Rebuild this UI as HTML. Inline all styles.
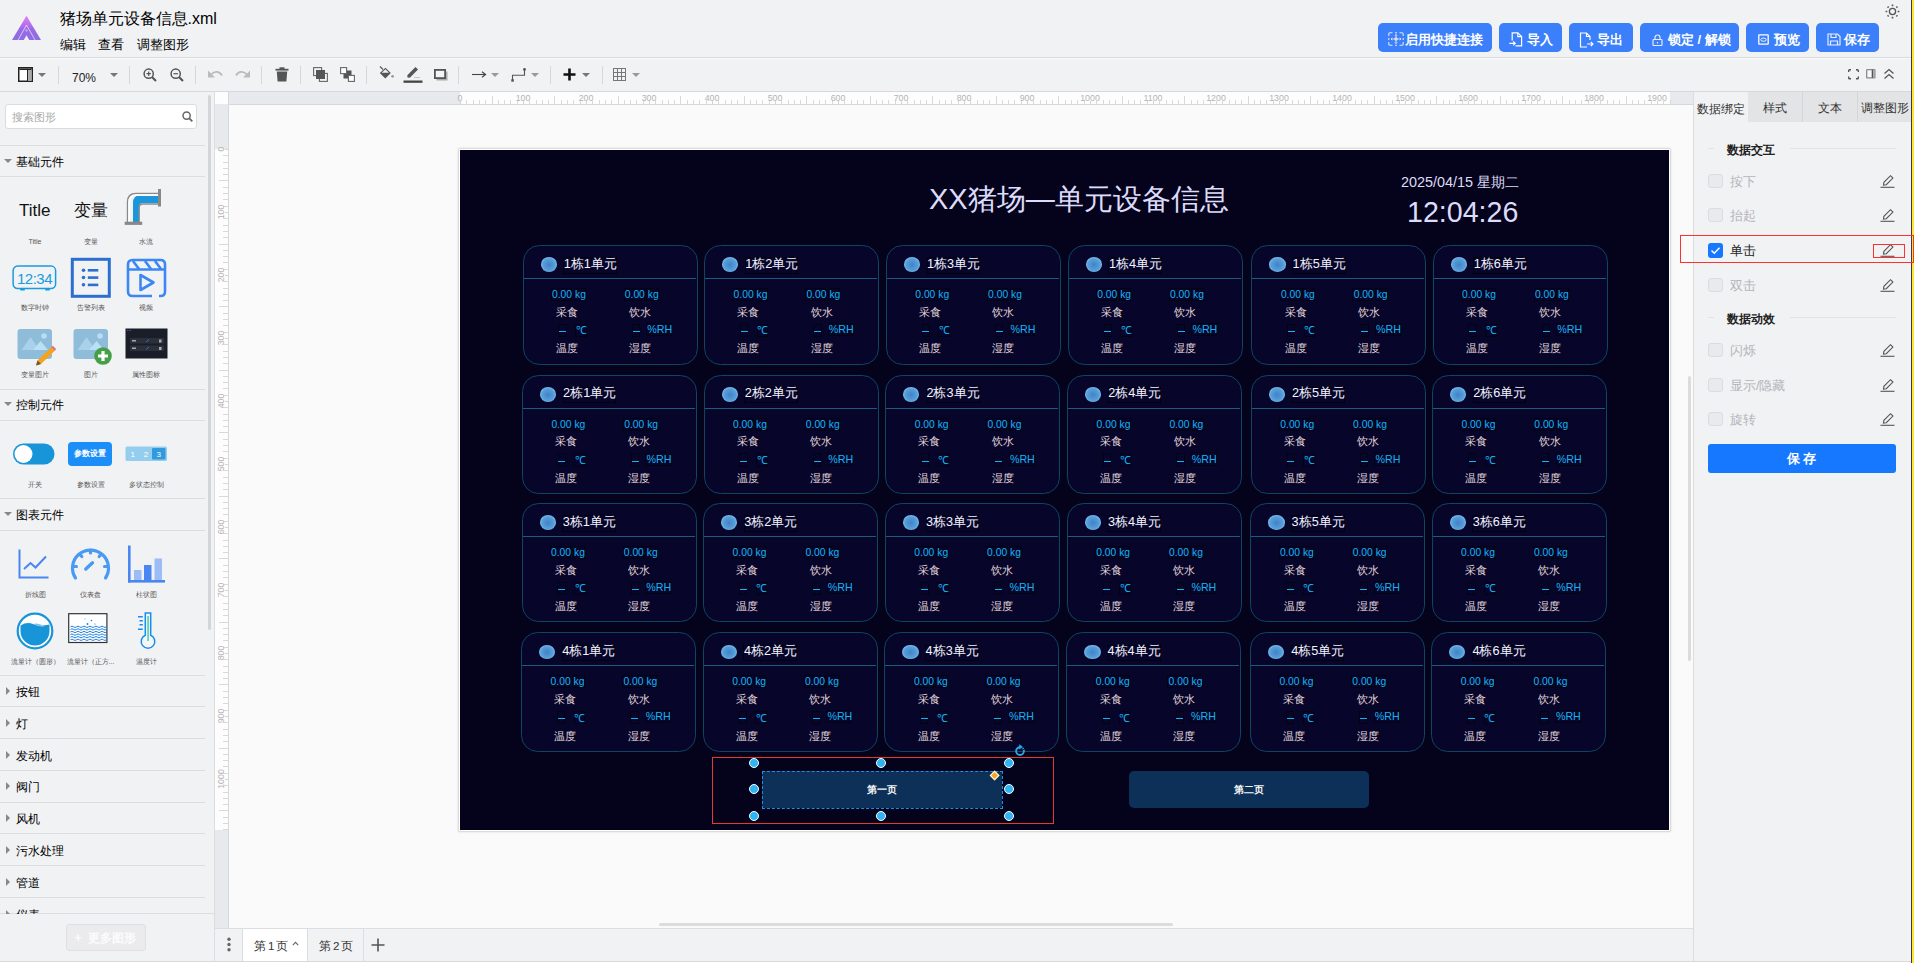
<!DOCTYPE html><html><head><meta charset="utf-8"><style>
*{box-sizing:border-box;margin:0;padding:0}
html,body{width:1914px;height:963px;overflow:hidden;background:#f1f2f4;font-family:"Liberation Sans",sans-serif;color:#1f1f1f}
.ab{position:absolute}
.t{position:absolute;white-space:nowrap;line-height:1}
.hb{position:absolute;top:23px;height:29px;background:#3b7ffb;border-radius:5px;color:#fff;font-weight:bold;font-size:13px}
.sep{position:absolute;top:66px;width:1px;height:18px;background:#d5d7da}
.caret{position:absolute;width:0;height:0;border-left:4px solid transparent;border-right:4px solid transparent;border-top:4px solid #777}
.hl{position:absolute;left:0;width:205px;height:1px;background:#dcdde0}
.sec{position:absolute;left:16px;font-size:12px;color:#000;line-height:1}
.tri-d{position:absolute;left:4px;width:0;height:0;border-left:4px solid transparent;border-right:4px solid transparent;border-top:4px solid #888}
.tri-r{position:absolute;left:6px;width:0;height:0;border-top:4px solid transparent;border-bottom:4px solid transparent;border-left:4px solid #888}
.lbl{position:absolute;font-size:7px;color:#555;line-height:1;white-space:nowrap;text-align:center;width:56px}

.card{position:absolute;width:175px;height:120.2px;border:1.8px solid #0e4562;border-radius:16.5px;background:#07062a}
.card .hl2{position:absolute;left:0;top:31.8px;width:172px;height:1.3px;background:#1b5b7b}
.ball{position:absolute;left:17px;top:11.2px;width:16.3px;height:14.6px;border-radius:50%;background:radial-gradient(ellipse at 50% 52%,#4282c4 0%,#569edb 52%,#86c6ef 78%,#a6dbf7 86%,#4f98d6 100%)}
.ttl{position:absolute;left:39.8px;top:11.2px;width:53.6px;height:16.4px;border:1px solid #02020f}
.ttx{position:absolute;left:40.2px;top:11.5px;font-size:12.7px;font-weight:normal;color:#f4f4ff;line-height:1;white-space:nowrap}
.ttx span{display:inline-block}
.bx{position:absolute;border:1px solid #030314;height:13.3px}
.val{position:absolute;font-size:10.3px;color:#14b4f2;line-height:1;white-space:nowrap}
.nm{position:absolute;font-size:10.5px;color:#e4d8dc;line-height:1;white-space:nowrap}
.dd{position:absolute;width:7px;height:1.2px;background:#14b4f2}
</style></head><body>
<svg class="ab" style="left:10px;top:14px" width="34" height="28" viewBox="0 0 34 28">
<defs><linearGradient id="lg" x1="0" y1="0" x2="0" y2="1"><stop offset="0" stop-color="#ec7cf8"/><stop offset="0.55" stop-color="#9a6ae6"/><stop offset="1" stop-color="#8e6de0"/></linearGradient></defs>
<polygon points="16.5,1.8 31,26 2,26" fill="url(#lg)"/>
<polygon points="16.5,21.3 13.7,26.2 19.4,26.2" fill="#f1f2f4"/>
<polyline points="8.1,26 16.5,11 25,26" fill="none" stroke="#f5eaff" stroke-width="0.7"/>
<circle cx="16.5" cy="16.5" r="0.8" fill="none" stroke="#f5eaff" stroke-width="0.5"/>
</svg>
<div class="t" style="left:59.5px;top:11px;font-size:16px;color:#000">猪场单元设备信息.xml</div>
<div class="t" style="left:59.5px;top:38px;font-size:13px;color:#000">编辑</div>
<div class="t" style="left:97.8px;top:38px;font-size:13px;color:#000">查看</div>
<div class="t" style="left:136.8px;top:38px;font-size:13px;color:#000">调整图形</div>
<div class="ab" style="left:0;top:57px;width:1911px;height:1px;background:#d9dadd"></div>
<div class="ab" style="left:0;top:58px;width:1911px;height:1px;background:#fbfbfc"></div>
<div class="hb" style="left:1378px;width:114px"></div>
<div class="hb" style="left:1499px;width:63px"></div>
<div class="hb" style="left:1569px;width:64px"></div>
<div class="hb" style="left:1640px;width:99px"></div>
<div class="hb" style="left:1746px;width:63px"></div>
<div class="hb" style="left:1816px;width:63px"></div>
<div class="t" style="left:1405px;top:33px;font-size:13px;font-weight:bold;color:#fff">启用快捷连接</div>
<div class="t" style="left:1527px;top:33px;font-size:13px;font-weight:bold;color:#fff">导入</div>
<div class="t" style="left:1597px;top:33px;font-size:13px;font-weight:bold;color:#fff">导出</div>
<div class="t" style="left:1668px;top:33px;font-size:13px;font-weight:bold;color:#fff">锁定 / 解锁</div>
<div class="t" style="left:1774px;top:33px;font-size:13px;font-weight:bold;color:#fff">预览</div>
<div class="t" style="left:1844px;top:33px;font-size:13px;font-weight:bold;color:#fff">保存</div>
<svg class="ab" style="left:1387.5px;top:32px" width="16" height="14" viewBox="0 0 16 14" fill="none" stroke="#dfe6f7" stroke-width="1.1">
<path d="M0.8 4V2Q0.8 0.8 2 0.8H4.5M11.5 0.8H14Q15.2 0.8 15.2 2V4M15.2 10V12Q15.2 13.2 14 13.2H11.5M4.5 13.2H2Q0.8 13.2 0.8 12V10M7 0.8H9M0.8 6V8M15.2 6V8M7 13.2H9"/>
<path d="M8 2.5V11.5M3 7H13M6.8 3.7L8 2.5L9.2 3.7M6.8 10.3L8 11.5L9.2 10.3M4.2 5.8L3 7L4.2 8.2M11.8 5.8L13 7L11.8 8.2" stroke-width="0.9"/><circle cx="8" cy="7" r="1.7" fill="#e6dfd0" stroke="none"/></svg>
<svg class="ab" style="left:1509px;top:32.3px" width="14" height="15" viewBox="0 0 14 15" fill="none" stroke="#fff" stroke-width="1.2">
<path d="M3.2 8.5V0.8H8.8L12.6 4.6V13.8H6.5"/><path d="M8.8 0.8V4.6H12.6"/><path d="M0.3 11.3H6.2M4.2 9.3L6.2 11.3L4.2 13.3"/></svg>
<svg class="ab" style="left:1579px;top:31.5px" width="15" height="16" viewBox="0 0 15 16" fill="none" stroke="#fff" stroke-width="1.2">
<path d="M8 15H1.5V1H7.5L11 4.5V8"/><path d="M7.5 1V4.5H11"/><path d="M8 12H14M11.8 9.8L14 12L11.8 14.2"/></svg>
<svg class="ab" style="left:1652px;top:33.5px" width="11" height="12" viewBox="0 0 11 12" fill="none" stroke="#e4ebfb" stroke-width="1.2">
<rect x="1" y="5.5" width="9" height="6" rx="0.8"/><path d="M3 5.5V3.5A2.5 2.5 0 0 1 8 3.5V5.5"/><path d="M5.5 8V9.5"/></svg>
<svg class="ab" style="left:1757.5px;top:33.5px" width="11" height="11" viewBox="0 0 11 11" fill="none" stroke="#fff" stroke-width="1.3">
<rect x="0.8" y="0.8" width="9.4" height="9.4" rx="0.5"/><ellipse cx="5.5" cy="5.7" rx="2.7" ry="1.6" stroke-width="0.9"/></svg>
<svg class="ab" style="left:1826.5px;top:33px" width="14" height="13" viewBox="0 0 14 13" fill="none" stroke="#e8eefc" stroke-width="1.2">
<path d="M1 1H10.5L13 3.5V12H1Z"/><path d="M4 1V4.5H9V1"/><path d="M3.5 12V8H10.5V12"/></svg>
<svg class="ab" style="left:1884.4px;top:3.3px" width="17" height="17" viewBox="0 0 17 17" fill="none" stroke="#555" stroke-width="1.3">
<circle cx="8.5" cy="8.5" r="3.1"/><path d="M8.5 1.6V3.3M8.5 13.7V15.4M1.6 8.5H3.3M13.7 8.5H15.4M3.6 3.6L4.6 4.6M12.4 12.4L13.4 13.4M3.6 13.4L4.6 12.4M12.4 4.6L13.4 3.6" stroke-width="1.6"/></svg>
<div class="ab" style="left:0;top:91px;width:1911px;height:1px;background:#d6d8db"></div>
<div class="sep" style="left:58px"></div>
<div class="sep" style="left:129px"></div>
<div class="sep" style="left:195px"></div>
<div class="sep" style="left:261px"></div>
<div class="sep" style="left:300px"></div>
<div class="sep" style="left:366px"></div>
<div class="sep" style="left:458px"></div>
<div class="sep" style="left:550px"></div>
<div class="sep" style="left:602px"></div>
<svg class="ab" style="left:18px;top:67px" width="15" height="15" viewBox="0 0 15 15"><rect x="0.75" y="0.75" width="13.5" height="13.5" fill="#fff" stroke="#222" stroke-width="1.5"/><rect x="1.5" y="1.5" width="12" height="1.5" fill="#222"/><rect x="9" y="3" width="1.2" height="11" fill="#222"/><rect x="10.2" y="3" width="3.3" height="11" fill="#aaa"/></svg>
<div class="caret" style="left:38px;top:73px"></div>
<div class="t" style="left:72px;top:71.5px;font-size:12px;color:#222">70%</div>
<div class="caret" style="left:110px;top:73px"></div>
<svg class="ab" style="left:143px;top:68px" width="14" height="14" viewBox="0 0 14 14" fill="none" stroke="#555" stroke-width="1.5"><circle cx="5.7" cy="5.7" r="4.6"/><path d="M9.2 9.2L13 13" stroke-width="2"/><path d="M3.5 5.7H7.9M5.7 3.5V7.9" stroke-width="1.2"/></svg>
<svg class="ab" style="left:170px;top:68px" width="14" height="14" viewBox="0 0 14 14" fill="none" stroke="#555" stroke-width="1.5"><circle cx="5.7" cy="5.7" r="4.6"/><path d="M9.2 9.2L13 13" stroke-width="2"/><path d="M3.5 5.7H7.9" stroke-width="1.2"/></svg>
<svg class="ab" style="left:208px;top:70px" width="15" height="9" viewBox="0 0 15 9"><path d="M3.5 4.2C6.5 1 11.5 1 14 5.5" fill="none" stroke="#bbb" stroke-width="1.8"/><polygon points="0,0.5 0,7.5 7,7.5" fill="#bbb"/></svg>
<svg class="ab" style="left:235px;top:70px" width="15" height="9" viewBox="0 0 15 9"><path d="M11.5 4.2C8.5 1 3.5 1 1 5.5" fill="none" stroke="#bbb" stroke-width="1.8"/><polygon points="15,0.5 15,7.5 8,7.5" fill="#bbb"/></svg>
<svg class="ab" style="left:275px;top:67px" width="14" height="15" viewBox="0 0 14 15"><rect x="0.5" y="1.8" width="13" height="1.8" fill="#555"/><rect x="4.5" y="0.3" width="5" height="2" fill="#555"/><path d="M1.8 4.5H12.2L11.4 14.5H2.6Z" fill="#555"/></svg>
<svg class="ab" style="left:313px;top:67px" width="15" height="15" viewBox="0 0 15 15"><rect x="0.6" y="0.6" width="8" height="8" fill="none" stroke="#666" stroke-width="1.1"/><rect x="6.4" y="6.4" width="8" height="8" fill="none" stroke="#666" stroke-width="1.1"/><rect x="3" y="3" width="9" height="9" fill="#555"/></svg>
<svg class="ab" style="left:340px;top:67px" width="15" height="15" viewBox="0 0 15 15"><rect x="3.5" y="3.5" width="8" height="8" fill="#555"/><rect x="0.6" y="0.6" width="6" height="6" fill="#fff" stroke="#666" stroke-width="1.1"/><rect x="8.4" y="8.4" width="6" height="6" fill="#fff" stroke="#666" stroke-width="1.1"/></svg>
<svg class="ab" style="left:379px;top:66px" width="16" height="14" viewBox="0 0 16 14"><path d="M1 0.5L4 3.5" stroke="#555" stroke-width="1.1"/><path d="M0.8 7L6.5 1.8L11.8 7L6.3 12.5Z" fill="#555"/><path d="M2.6 6.8L6.5 3.3L10 6.8Z" fill="#f1f2f4"/><circle cx="13.6" cy="10.3" r="1.4" fill="#999"/></svg>
<svg class="ab" style="left:403px;top:66px" width="20" height="17" viewBox="0 0 20 17"><path d="M4.5 11.5L4.3 9.2L12.5 1L15 3.5L6.8 11.7Z" fill="#555"/><rect x="0.5" y="14.5" width="19" height="2.3" fill="#444"/><rect x="11" y="11" width="6" height="0.8" fill="#bbb"/></svg>
<svg class="ab" style="left:434px;top:69px" width="14" height="12" viewBox="0 0 14 12"><rect x="2.5" y="2.5" width="11" height="9" fill="#aaa"/><rect x="0.9" y="0.9" width="10.2" height="8.2" fill="#f4f4f4" stroke="#555" stroke-width="1.8"/></svg>
<svg class="ab" style="left:472px;top:71px" width="15" height="7" viewBox="0 0 15 7"><path d="M0 3.5H13" stroke="#444" stroke-width="1.1"/><path d="M10 0.8L13.6 3.5L10 6.2" fill="none" stroke="#444" stroke-width="1.1"/></svg>
<div class="caret" style="left:491px;top:73px;border-top-color:#999"></div>
<svg class="ab" style="left:511px;top:68px" width="16" height="14" viewBox="0 0 16 14"><path d="M1.5 12.5V7.2H13.5V1.5" fill="none" stroke="#555" stroke-width="1.1"/><circle cx="13.5" cy="1.5" r="1.4" fill="#555"/><rect x="0.3" y="11.2" width="2.5" height="2.5" fill="#555"/></svg>
<div class="caret" style="left:531px;top:73px;border-top-color:#999"></div>
<svg class="ab" style="left:563px;top:68px" width="13" height="13" viewBox="0 0 13 13"><path d="M6.5 0.5V12.5M0.5 6.5H12.5" stroke="#111" stroke-width="2.6"/></svg>
<div class="caret" style="left:582px;top:73px;border-top-color:#777"></div>
<svg class="ab" style="left:613px;top:68px" width="13" height="13" viewBox="0 0 13 13" fill="none" stroke="#777" stroke-width="1"><rect x="0.5" y="0.5" width="12" height="12"/><path d="M4.5 0.5V12.5M8.5 0.5V12.5M0.5 4.5H12.5M0.5 8.5H12.5"/></svg>
<div class="caret" style="left:632px;top:73px;border-top-color:#999"></div>
<svg class="ab" style="left:1847.5px;top:68.8px" width="11" height="11" viewBox="0 0 11 11" fill="none" stroke="#555" stroke-width="1.4"><path d="M0.7 3V1.5Q0.7 0.7 1.5 0.7H3M8 0.7H9.5Q10.3 0.7 10.3 1.5V3M10.3 7.5V9Q10.3 9.8 9.5 9.8H8M3 9.8H1.5Q0.7 9.8 0.7 9V7.5"/></svg>
<svg class="ab" style="left:1866.3px;top:69.3px" width="10" height="10" viewBox="0 0 10 10"><rect x="0.7" y="0.7" width="8.2" height="8.2" fill="#f8f8f8" stroke="#8a8a8a" stroke-width="1.3" rx="0.5"/><rect x="5.7" y="0.7" width="1.3" height="8.2" fill="#555"/><rect x="7" y="1.3" width="1.3" height="7" fill="#aaa"/></svg>
<svg class="ab" style="left:1883px;top:68px" width="12" height="12" viewBox="0 0 12 12" fill="none" stroke="#555" stroke-width="1.3"><path d="M1.5 5.5L6 1.5L10.5 5.5M1.5 10.5L6 6.5L10.5 10.5"/></svg>
<div class="ab" style="left:214px;top:92px;width:1px;height:871px;background:#dcdde0"></div>
<div class="ab" style="left:208px;top:95px;width:3px;height:535px;background:#d4d5d8;border-radius:2px"></div>
<div class="ab" style="left:5px;top:104px;width:192px;height:25px;background:#fff;border:1px solid #dcdcdc;border-radius:3px"></div>
<div class="t" style="left:12px;top:112px;font-size:11px;color:#a8a8a8">搜索图形</div>
<svg class="ab" style="left:182px;top:111px" width="11" height="11" viewBox="0 0 11 11" fill="none" stroke="#666" stroke-width="1.5"><circle cx="4.6" cy="4.6" r="3.6"/><path d="M7.3 7.3L10.3 10.3" stroke-width="1.8"/></svg>
<div class="hl" style="top:145px"></div>
<div class="hl" style="top:176px"></div>
<div class="hl" style="top:389px"></div>
<div class="hl" style="top:420px"></div>
<div class="hl" style="top:498px"></div>
<div class="hl" style="top:530px"></div>
<div class="hl" style="top:675px"></div>
<div class="hl" style="top:706px"></div>
<div class="hl" style="top:738px"></div>
<div class="hl" style="top:770px"></div>
<div class="hl" style="top:802px"></div>
<div class="hl" style="top:833px"></div>
<div class="hl" style="top:865px"></div>
<div class="hl" style="top:897px"></div>
<div class="ab" style="left:0;top:913px;width:214px;height:1px;background:#dcdde0"></div>
<div class="tri-d" style="top:159px"></div>
<div class="sec" style="top:156px">基础元件</div>
<div class="tri-d" style="top:402px"></div>
<div class="sec" style="top:399px">控制元件</div>
<div class="tri-d" style="top:512px"></div>
<div class="sec" style="top:509px">图表元件</div>
<div class="tri-r" style="top:687px"></div>
<div class="sec" style="top:686px">按钮</div>
<div class="tri-r" style="top:719px"></div>
<div class="sec" style="top:718px">灯</div>
<div class="tri-r" style="top:751px"></div>
<div class="sec" style="top:750px">发动机</div>
<div class="tri-r" style="top:782px"></div>
<div class="sec" style="top:781px">阀门</div>
<div class="tri-r" style="top:814px"></div>
<div class="sec" style="top:813px">风机</div>
<div class="tri-r" style="top:846px"></div>
<div class="sec" style="top:845px">污水处理</div>
<div class="tri-r" style="top:878px"></div>
<div class="sec" style="top:877px">管道</div>
<div class="tri-r" style="top:910px"></div>
<div class="sec" style="top:909px">仪表</div>
<div class="ab" style="left:0;top:914px;width:214px;height:49px;background:#f1f2f4"></div>
<div class="ab" style="left:66px;top:924px;width:80px;height:27px;background:#ebebed;border:1px solid #dedfe2;border-radius:3px"></div>
<div class="t" style="left:74.5px;top:932px;font-size:12.2px;font-weight:bold;color:#fbfbfc">+&nbsp; 更多图形</div>
<div class="t" style="left:19px;top:202px;font-size:17px;color:#111">Title</div>
<div class="t" style="left:74px;top:202px;font-size:17px;color:#111">变量</div>
<svg class="ab" style="left:124px;top:188px" width="38" height="38" viewBox="0 0 38 38">
<path d="M9 34V15Q9 7 17 7H34V15H19Q15 15 15 19V34Z" fill="#1a96dc"/>
<path d="M3.5 34V14Q3.5 5.5 12 5.5H34" fill="none" stroke="#8a8a8a" stroke-width="1.4"/>
<path d="M5.2 34V14.5Q5.2 7.2 12.5 7.2H34" fill="none" stroke="#fff" stroke-width="1.8"/>
<path d="M15.2 34V19.5Q15.2 16 18.7 16H34" fill="none" stroke="#8a8a8a" stroke-width="1.4"/>
<rect x="34" y="1" width="3" height="17.5" fill="#888"/>
<rect x="0.7" y="33.7" width="17.5" height="3.2" fill="#888"/>
</svg>
<div class="lbl" style="left:5.0px;top:238px;width:60px">Title</div>
<div class="lbl" style="left:60.5px;top:238px;width:60px">变量</div>
<div class="lbl" style="left:116.0px;top:238px;width:60px">水流</div>
<svg class="ab" style="left:12.3px;top:265.2px" width="46" height="27" viewBox="0 0 46 27">
<rect x="1.1" y="1.1" width="42.5" height="22.5" rx="4.5" fill="none" stroke="#1a9ae0" stroke-width="1.5"/>
<rect x="8" y="24" width="5" height="1.6" rx="0.8" fill="#1a9ae0"/><rect x="33" y="24" width="5" height="1.6" rx="0.8" fill="#1a9ae0"/>
<text x="22.5" y="19" text-anchor="middle" font-family="Liberation Sans" font-size="15" fill="#1a9ae0" letter-spacing="-0.5">12:34</text>
</svg>
<svg class="ab" style="left:70px;top:257px" width="42" height="42" viewBox="0 0 42 42">
<rect x="2.3" y="2.3" width="37" height="37" fill="none" stroke="#2d6fd1" stroke-width="3"/>
<circle cx="13.5" cy="13.2" r="1.8" fill="#2d6fd1"/><circle cx="13.5" cy="20.5" r="1.8" fill="#2d6fd1"/><circle cx="13.5" cy="27.8" r="1.8" fill="#2d6fd1"/>
<rect x="17.8" y="12" width="10.5" height="2.6" fill="#2d6fd1"/><rect x="17.8" y="19.3" width="10.5" height="2.6" fill="#2d6fd1"/><rect x="17.8" y="26.6" width="10.5" height="2.6" fill="#2d6fd1"/>
</svg>
<svg class="ab" style="left:126px;top:257px" width="42" height="42" viewBox="0 0 42 42" fill="none" stroke="#3d87f5" stroke-width="2.6">
<path d="M26 39H6.5Q2 39 2 34.5V7.5Q2 3 6.5 3H34.5Q39 3 39 7.5V34.5Q39 39 34.5 39H33"/>
<path d="M2 12.5H39M7 4L13 12M19 4L25 12M29 4L35 12"/>
<path d="M14.5 18V33L27.5 25.5Z" stroke-linejoin="round"/>
</svg>
<div class="lbl" style="left:5.0px;top:304px;width:60px">数字时钟</div>
<div class="lbl" style="left:60.5px;top:304px;width:60px">告警列表</div>
<div class="lbl" style="left:116.0px;top:304px;width:60px">视频</div>
<svg class="ab" style="left:17px;top:328px" width="40" height="40" viewBox="0 0 40 40">
<rect x="0.5" y="1" width="34.5" height="30" rx="3" fill="#8fbcd8"/>
<polygon points="4.5,22 13.5,9 22.5,22" fill="#a9d1ea"/><polygon points="16,22 23.5,13 31,22" fill="#b9e0f5"/><circle cx="27" cy="8" r="2.8" fill="#b7ddf2"/><path d="M19 37.5L20.5 32.5L34 19.5L37.5 23L24 36Z" fill="#f5a31a"/><path d="M34 19.5L35.8 17.8L39.3 21.3L37.5 23Z" fill="#e57373"/><path d="M19 37.5L20.5 32.5L24 36Z" fill="#444" opacity="0.8"/></svg>
<svg class="ab" style="left:73px;top:328px" width="40" height="40" viewBox="0 0 40 40">
<rect x="0.5" y="1" width="34.5" height="30" rx="3" fill="#8fbcd8"/>
<polygon points="4.5,22 13.5,9 22.5,22" fill="#a9d1ea"/><polygon points="16,22 23.5,13 31,22" fill="#b9e0f5"/><circle cx="27" cy="8" r="2.8" fill="#b7ddf2"/><circle cx="30" cy="28" r="8.8" fill="#43a047"/><path d="M30 23V33M25 28H35" stroke="#fff" stroke-width="3.2"/></svg>
<svg class="ab" style="left:125px;top:328px" width="44" height="31" viewBox="0 0 44 31">
<rect x="0.5" y="0.5" width="42" height="30" fill="#1a1e29"/>
<rect x="5" y="10" width="34" height="5.5" fill="#2c303a"/><rect x="5" y="17.5" width="34" height="5.5" fill="#2c303a"/>
<circle cx="2.5" cy="2.5" r="0.5" fill="#3a6bd0"/><circle cx="4" cy="2.5" r="0.5" fill="#3a6bd0"/><circle cx="5.5" cy="2.5" r="0.5" fill="#3a6bd0"/>
<rect x="7" y="12" width="4" height="1.5" fill="#aaa"/><rect x="7" y="19.5" width="4" height="1.5" fill="#aaa"/>
<path d="M21 14L24 11.5M21 21.5L24 19" stroke="#3a6bd0" stroke-width="1"/>
<rect x="34" y="11.5" width="2.5" height="3" fill="#aaa"/><rect x="34" y="19" width="2.5" height="3" fill="#aaa"/>
</svg>
<div class="lbl" style="left:5.0px;top:371px;width:60px">变量图片</div>
<div class="lbl" style="left:60.5px;top:371px;width:60px">图片</div>
<div class="lbl" style="left:116.0px;top:371px;width:60px">属性图标</div>
<svg class="ab" style="left:12px;top:442px" width="44" height="24" viewBox="0 0 44 24">
<rect x="1" y="1.5" width="41.5" height="21" rx="10.5" fill="#1894d8"/><circle cx="11.5" cy="12" r="9" fill="#fff"/></svg>
<div class="ab" style="left:68px;top:442px;width:44px;height:24px;background:#1b8ef8;border-radius:4px"></div>
<div class="t" style="left:74px;top:450px;font-size:8px;color:#fff;font-weight:bold">参数设置</div>
<svg class="ab" style="left:125px;top:446px" width="43" height="16" viewBox="0 0 43 16">
<rect x="0.5" y="0.5" width="41.5" height="14.5" rx="1.5" fill="#94cdee"/><rect x="27" y="2" width="13.5" height="11.5" rx="1" fill="#3199dd"/>
<text x="7.7" y="11" font-family="Liberation Sans" font-size="8" fill="#fff" text-anchor="middle">1</text>
<text x="21" y="11" font-family="Liberation Sans" font-size="8" fill="#fff" text-anchor="middle">2</text>
<text x="33.8" y="11" font-family="Liberation Sans" font-size="8" fill="#fff" text-anchor="middle">3</text></svg>
<div class="lbl" style="left:5.0px;top:481px;width:60px">开关</div>
<div class="lbl" style="left:60.5px;top:481px;width:60px">参数设置</div>
<div class="lbl" style="left:116.0px;top:481px;width:60px">多状态控制</div>
<svg class="ab" style="left:18px;top:549px" width="32" height="31" viewBox="0 0 32 31" fill="none" stroke="#4a86f2">
<path d="M1.5 0.5V28.5H30.5" stroke-width="2"/><path d="M6 20L12.5 14L17.5 18.5L28 7.5" stroke-width="2"/></svg>
<svg class="ab" style="left:70px;top:547px" width="41" height="34" viewBox="0 0 41 34" fill="none" stroke="#4a9af5" stroke-width="3.2" stroke-linecap="round">
<path d="M5.5 31A18 18 0 1 1 35.5 31"/><path d="M20.5 3V6M10 7.5L11.8 9.5M31 7.5L29.2 9.5M3.5 19.5H6.5M34.5 19.5H37.5"/><path d="M15.8 22L22.5 15.8" stroke-width="3.4"/></svg>
<svg class="ab" style="left:127px;top:545px" width="39" height="39" viewBox="0 0 39 39">
<rect x="1" y="0.5" width="2.6" height="37" fill="#4a86f2"/><rect x="1" y="35" width="37" height="2.6" fill="#4a86f2"/>
<rect x="7" y="25" width="7.5" height="10" fill="#9bbcf5"/><rect x="17" y="20" width="7.5" height="15" fill="#4a86f2"/><rect x="27.5" y="13.5" width="7.5" height="21.5" fill="#9bbcf5"/></svg>
<div class="lbl" style="left:5.0px;top:591px;width:60px">折线图</div>
<div class="lbl" style="left:60.5px;top:591px;width:60px">仪表盘</div>
<div class="lbl" style="left:116.0px;top:591px;width:60px">柱状图</div>
<svg class="ab" style="left:16px;top:612px" width="38" height="38" viewBox="0 0 38 38">
<circle cx="19" cy="19" r="17.3" fill="#fff" stroke="#1894d8" stroke-width="2.2"/>
<path d="M4.5 13.5Q11 9.5 17 12Q24 15 33.5 12.5V19A14.5 14.5 0 0 1 4.5 19Z" fill="#1894d8"/>
<path d="M17 12Q23 10.5 28 14.5Q24 15.5 17 12Z" fill="#7fc4ea"/></svg>
<svg class="ab" style="left:68px;top:613px" width="40" height="31" viewBox="0 0 40 31">
<rect x="0.7" y="0.7" width="38.2" height="28.8" fill="#fff" stroke="#333" stroke-width="1.2"/>
<g stroke="#1a7fe0" stroke-width="1" fill="none"><path d="M2.5 13.8q1.5 -1.3 3 0t3 0t3 0t3 0t3 0t3 0t3 0t3 0t3 0t3 0t3 0t3 0"/><path d="M2.5 16.4q1.5 -1.3 3 0t3 0t3 0t3 0t3 0t3 0t3 0t3 0t3 0t3 0t3 0t3 0"/><path d="M2.5 19.0q1.5 -1.3 3 0t3 0t3 0t3 0t3 0t3 0t3 0t3 0t3 0t3 0t3 0t3 0"/><path d="M2.5 21.6q1.5 -1.3 3 0t3 0t3 0t3 0t3 0t3 0t3 0t3 0t3 0t3 0t3 0t3 0"/><path d="M2.5 24.2q1.5 -1.3 3 0t3 0t3 0t3 0t3 0t3 0t3 0t3 0t3 0t3 0t3 0t3 0"/><path d="M2.5 26.8q1.5 -1.3 3 0t3 0t3 0t3 0t3 0t3 0t3 0t3 0t3 0t3 0t3 0t3 0"/></g><circle cx="19.5" cy="11" r="0.9" fill="#1a7fe0"/><circle cx="23.5" cy="7.5" r="0.8" fill="#1a7fe0"/><circle cx="27" cy="11" r="0.6" fill="#1a7fe0"/><circle cx="17" cy="6" r="0.5" fill="#1a7fe0"/></svg>
<svg class="ab" style="left:136px;top:611px" width="22" height="40" viewBox="0 0 22 40">
<path d="M9.3 2H14.7V24.2A6.8 6.8 0 1 1 9.3 24.2Z" fill="#f4f5f7" stroke="#1a8cf0" stroke-width="1.5"/>
<rect x="11.4" y="5" width="1.4" height="25" fill="#2ed1a5"/>
<rect x="2" y="5" width="4.8" height="1.5" fill="#1a8cf0"/><rect x="3.5" y="9" width="3.3" height="1.5" fill="#1a8cf0"/><rect x="3.5" y="13" width="3.3" height="1.5" fill="#1a8cf0"/><rect x="2" y="17.5" width="4.8" height="1.5" fill="#1a8cf0"/></svg>
<div class="lbl" style="left:0.0px;top:658px;width:70px">流量计（圆形）</div>
<div class="lbl" style="left:55.5px;top:658px;width:70px">流量计（正方...</div>
<div class="lbl" style="left:116.0px;top:658px;width:60px">温度计</div>
<div class="ab" style="left:215px;top:92px;width:1478px;height:836px;background:#fafafa"></div>
<div class="ab" style="left:215px;top:92px;width:13px;height:12px;background:#fdfdfd"></div>
<div class="ab" style="left:228px;top:92px;width:1465px;height:12px;background:#e8e9ec"></div>
<div class="ab" style="left:460px;top:92px;width:1210px;height:12px;background:#fdfdfd"></div>
<div class="ab" style="left:215px;top:104px;width:1478px;height:1px;background:#d7d8db"></div>
<div class="ab" style="left:215px;top:104px;width:13px;height:824px;background:#e8e9ec"></div>
<div class="ab" style="left:215px;top:149px;width:13px;height:681px;background:#fdfdfd"></div>
<div class="ab" style="left:228px;top:92px;width:1px;height:836px;background:#d7d8db"></div>
<svg class="ab" style="left:0;top:0" width="1914" height="963"><line x1="460.5" y1="101" x2="460.5" y2="104" stroke="#d4d4d4" stroke-width="1"/><text x="460.0" y="101" font-family="Liberation Sans" font-size="8.8" fill="#b4b4b4" text-anchor="middle">0</text><line x1="466.5" y1="100" x2="466.5" y2="104" stroke="#d9d9d9" stroke-width="1"/><line x1="473.5" y1="100" x2="473.5" y2="104" stroke="#d9d9d9" stroke-width="1"/><line x1="479.5" y1="100" x2="479.5" y2="104" stroke="#d9d9d9" stroke-width="1"/><line x1="485.5" y1="100" x2="485.5" y2="104" stroke="#d9d9d9" stroke-width="1"/><line x1="492.5" y1="96" x2="492.5" y2="104" stroke="#d9d9d9" stroke-width="1"/><line x1="498.5" y1="100" x2="498.5" y2="104" stroke="#d9d9d9" stroke-width="1"/><line x1="504.5" y1="100" x2="504.5" y2="104" stroke="#d9d9d9" stroke-width="1"/><line x1="510.5" y1="100" x2="510.5" y2="104" stroke="#d9d9d9" stroke-width="1"/><line x1="517.5" y1="100" x2="517.5" y2="104" stroke="#d9d9d9" stroke-width="1"/><line x1="523.5" y1="101" x2="523.5" y2="104" stroke="#d4d4d4" stroke-width="1"/><text x="523.0" y="101" font-family="Liberation Sans" font-size="8.8" fill="#b4b4b4" text-anchor="middle">100</text><line x1="529.5" y1="100" x2="529.5" y2="104" stroke="#d9d9d9" stroke-width="1"/><line x1="536.5" y1="100" x2="536.5" y2="104" stroke="#d9d9d9" stroke-width="1"/><line x1="542.5" y1="100" x2="542.5" y2="104" stroke="#d9d9d9" stroke-width="1"/><line x1="548.5" y1="100" x2="548.5" y2="104" stroke="#d9d9d9" stroke-width="1"/><line x1="554.5" y1="96" x2="554.5" y2="104" stroke="#d9d9d9" stroke-width="1"/><line x1="561.5" y1="100" x2="561.5" y2="104" stroke="#d9d9d9" stroke-width="1"/><line x1="567.5" y1="100" x2="567.5" y2="104" stroke="#d9d9d9" stroke-width="1"/><line x1="573.5" y1="100" x2="573.5" y2="104" stroke="#d9d9d9" stroke-width="1"/><line x1="580.5" y1="100" x2="580.5" y2="104" stroke="#d9d9d9" stroke-width="1"/><line x1="586.5" y1="101" x2="586.5" y2="104" stroke="#d4d4d4" stroke-width="1"/><text x="586.0" y="101" font-family="Liberation Sans" font-size="8.8" fill="#b4b4b4" text-anchor="middle">200</text><line x1="592.5" y1="100" x2="592.5" y2="104" stroke="#d9d9d9" stroke-width="1"/><line x1="599.5" y1="100" x2="599.5" y2="104" stroke="#d9d9d9" stroke-width="1"/><line x1="605.5" y1="100" x2="605.5" y2="104" stroke="#d9d9d9" stroke-width="1"/><line x1="611.5" y1="100" x2="611.5" y2="104" stroke="#d9d9d9" stroke-width="1"/><line x1="618.5" y1="96" x2="618.5" y2="104" stroke="#d9d9d9" stroke-width="1"/><line x1="624.5" y1="100" x2="624.5" y2="104" stroke="#d9d9d9" stroke-width="1"/><line x1="630.5" y1="100" x2="630.5" y2="104" stroke="#d9d9d9" stroke-width="1"/><line x1="636.5" y1="100" x2="636.5" y2="104" stroke="#d9d9d9" stroke-width="1"/><line x1="643.5" y1="100" x2="643.5" y2="104" stroke="#d9d9d9" stroke-width="1"/><line x1="649.5" y1="101" x2="649.5" y2="104" stroke="#d4d4d4" stroke-width="1"/><text x="649.0" y="101" font-family="Liberation Sans" font-size="8.8" fill="#b4b4b4" text-anchor="middle">300</text><line x1="655.5" y1="100" x2="655.5" y2="104" stroke="#d9d9d9" stroke-width="1"/><line x1="662.5" y1="100" x2="662.5" y2="104" stroke="#d9d9d9" stroke-width="1"/><line x1="668.5" y1="100" x2="668.5" y2="104" stroke="#d9d9d9" stroke-width="1"/><line x1="674.5" y1="100" x2="674.5" y2="104" stroke="#d9d9d9" stroke-width="1"/><line x1="680.5" y1="96" x2="680.5" y2="104" stroke="#d9d9d9" stroke-width="1"/><line x1="687.5" y1="100" x2="687.5" y2="104" stroke="#d9d9d9" stroke-width="1"/><line x1="693.5" y1="100" x2="693.5" y2="104" stroke="#d9d9d9" stroke-width="1"/><line x1="699.5" y1="100" x2="699.5" y2="104" stroke="#d9d9d9" stroke-width="1"/><line x1="706.5" y1="100" x2="706.5" y2="104" stroke="#d9d9d9" stroke-width="1"/><line x1="712.5" y1="101" x2="712.5" y2="104" stroke="#d4d4d4" stroke-width="1"/><text x="712.0" y="101" font-family="Liberation Sans" font-size="8.8" fill="#b4b4b4" text-anchor="middle">400</text><line x1="718.5" y1="100" x2="718.5" y2="104" stroke="#d9d9d9" stroke-width="1"/><line x1="725.5" y1="100" x2="725.5" y2="104" stroke="#d9d9d9" stroke-width="1"/><line x1="731.5" y1="100" x2="731.5" y2="104" stroke="#d9d9d9" stroke-width="1"/><line x1="737.5" y1="100" x2="737.5" y2="104" stroke="#d9d9d9" stroke-width="1"/><line x1="744.5" y1="96" x2="744.5" y2="104" stroke="#d9d9d9" stroke-width="1"/><line x1="750.5" y1="100" x2="750.5" y2="104" stroke="#d9d9d9" stroke-width="1"/><line x1="756.5" y1="100" x2="756.5" y2="104" stroke="#d9d9d9" stroke-width="1"/><line x1="762.5" y1="100" x2="762.5" y2="104" stroke="#d9d9d9" stroke-width="1"/><line x1="769.5" y1="100" x2="769.5" y2="104" stroke="#d9d9d9" stroke-width="1"/><line x1="775.5" y1="101" x2="775.5" y2="104" stroke="#d4d4d4" stroke-width="1"/><text x="775.0" y="101" font-family="Liberation Sans" font-size="8.8" fill="#b4b4b4" text-anchor="middle">500</text><line x1="781.5" y1="100" x2="781.5" y2="104" stroke="#d9d9d9" stroke-width="1"/><line x1="788.5" y1="100" x2="788.5" y2="104" stroke="#d9d9d9" stroke-width="1"/><line x1="794.5" y1="100" x2="794.5" y2="104" stroke="#d9d9d9" stroke-width="1"/><line x1="800.5" y1="100" x2="800.5" y2="104" stroke="#d9d9d9" stroke-width="1"/><line x1="806.5" y1="96" x2="806.5" y2="104" stroke="#d9d9d9" stroke-width="1"/><line x1="813.5" y1="100" x2="813.5" y2="104" stroke="#d9d9d9" stroke-width="1"/><line x1="819.5" y1="100" x2="819.5" y2="104" stroke="#d9d9d9" stroke-width="1"/><line x1="825.5" y1="100" x2="825.5" y2="104" stroke="#d9d9d9" stroke-width="1"/><line x1="832.5" y1="100" x2="832.5" y2="104" stroke="#d9d9d9" stroke-width="1"/><line x1="838.5" y1="101" x2="838.5" y2="104" stroke="#d4d4d4" stroke-width="1"/><text x="838.0" y="101" font-family="Liberation Sans" font-size="8.8" fill="#b4b4b4" text-anchor="middle">600</text><line x1="844.5" y1="100" x2="844.5" y2="104" stroke="#d9d9d9" stroke-width="1"/><line x1="851.5" y1="100" x2="851.5" y2="104" stroke="#d9d9d9" stroke-width="1"/><line x1="857.5" y1="100" x2="857.5" y2="104" stroke="#d9d9d9" stroke-width="1"/><line x1="863.5" y1="100" x2="863.5" y2="104" stroke="#d9d9d9" stroke-width="1"/><line x1="870.5" y1="96" x2="870.5" y2="104" stroke="#d9d9d9" stroke-width="1"/><line x1="876.5" y1="100" x2="876.5" y2="104" stroke="#d9d9d9" stroke-width="1"/><line x1="882.5" y1="100" x2="882.5" y2="104" stroke="#d9d9d9" stroke-width="1"/><line x1="888.5" y1="100" x2="888.5" y2="104" stroke="#d9d9d9" stroke-width="1"/><line x1="895.5" y1="100" x2="895.5" y2="104" stroke="#d9d9d9" stroke-width="1"/><line x1="901.5" y1="101" x2="901.5" y2="104" stroke="#d4d4d4" stroke-width="1"/><text x="901.0" y="101" font-family="Liberation Sans" font-size="8.8" fill="#b4b4b4" text-anchor="middle">700</text><line x1="907.5" y1="100" x2="907.5" y2="104" stroke="#d9d9d9" stroke-width="1"/><line x1="914.5" y1="100" x2="914.5" y2="104" stroke="#d9d9d9" stroke-width="1"/><line x1="920.5" y1="100" x2="920.5" y2="104" stroke="#d9d9d9" stroke-width="1"/><line x1="926.5" y1="100" x2="926.5" y2="104" stroke="#d9d9d9" stroke-width="1"/><line x1="932.5" y1="96" x2="932.5" y2="104" stroke="#d9d9d9" stroke-width="1"/><line x1="939.5" y1="100" x2="939.5" y2="104" stroke="#d9d9d9" stroke-width="1"/><line x1="945.5" y1="100" x2="945.5" y2="104" stroke="#d9d9d9" stroke-width="1"/><line x1="951.5" y1="100" x2="951.5" y2="104" stroke="#d9d9d9" stroke-width="1"/><line x1="958.5" y1="100" x2="958.5" y2="104" stroke="#d9d9d9" stroke-width="1"/><line x1="964.5" y1="101" x2="964.5" y2="104" stroke="#d4d4d4" stroke-width="1"/><text x="964.0" y="101" font-family="Liberation Sans" font-size="8.8" fill="#b4b4b4" text-anchor="middle">800</text><line x1="970.5" y1="100" x2="970.5" y2="104" stroke="#d9d9d9" stroke-width="1"/><line x1="977.5" y1="100" x2="977.5" y2="104" stroke="#d9d9d9" stroke-width="1"/><line x1="983.5" y1="100" x2="983.5" y2="104" stroke="#d9d9d9" stroke-width="1"/><line x1="989.5" y1="100" x2="989.5" y2="104" stroke="#d9d9d9" stroke-width="1"/><line x1="996.5" y1="96" x2="996.5" y2="104" stroke="#d9d9d9" stroke-width="1"/><line x1="1002.5" y1="100" x2="1002.5" y2="104" stroke="#d9d9d9" stroke-width="1"/><line x1="1008.5" y1="100" x2="1008.5" y2="104" stroke="#d9d9d9" stroke-width="1"/><line x1="1014.5" y1="100" x2="1014.5" y2="104" stroke="#d9d9d9" stroke-width="1"/><line x1="1021.5" y1="100" x2="1021.5" y2="104" stroke="#d9d9d9" stroke-width="1"/><line x1="1027.5" y1="101" x2="1027.5" y2="104" stroke="#d4d4d4" stroke-width="1"/><text x="1027.0" y="101" font-family="Liberation Sans" font-size="8.8" fill="#b4b4b4" text-anchor="middle">900</text><line x1="1033.5" y1="100" x2="1033.5" y2="104" stroke="#d9d9d9" stroke-width="1"/><line x1="1040.5" y1="100" x2="1040.5" y2="104" stroke="#d9d9d9" stroke-width="1"/><line x1="1046.5" y1="100" x2="1046.5" y2="104" stroke="#d9d9d9" stroke-width="1"/><line x1="1052.5" y1="100" x2="1052.5" y2="104" stroke="#d9d9d9" stroke-width="1"/><line x1="1058.5" y1="96" x2="1058.5" y2="104" stroke="#d9d9d9" stroke-width="1"/><line x1="1065.5" y1="100" x2="1065.5" y2="104" stroke="#d9d9d9" stroke-width="1"/><line x1="1071.5" y1="100" x2="1071.5" y2="104" stroke="#d9d9d9" stroke-width="1"/><line x1="1077.5" y1="100" x2="1077.5" y2="104" stroke="#d9d9d9" stroke-width="1"/><line x1="1084.5" y1="100" x2="1084.5" y2="104" stroke="#d9d9d9" stroke-width="1"/><line x1="1090.5" y1="101" x2="1090.5" y2="104" stroke="#d4d4d4" stroke-width="1"/><text x="1090.0" y="101" font-family="Liberation Sans" font-size="8.8" fill="#b4b4b4" text-anchor="middle">1000</text><line x1="1096.5" y1="100" x2="1096.5" y2="104" stroke="#d9d9d9" stroke-width="1"/><line x1="1103.5" y1="100" x2="1103.5" y2="104" stroke="#d9d9d9" stroke-width="1"/><line x1="1109.5" y1="100" x2="1109.5" y2="104" stroke="#d9d9d9" stroke-width="1"/><line x1="1115.5" y1="100" x2="1115.5" y2="104" stroke="#d9d9d9" stroke-width="1"/><line x1="1122.5" y1="96" x2="1122.5" y2="104" stroke="#d9d9d9" stroke-width="1"/><line x1="1128.5" y1="100" x2="1128.5" y2="104" stroke="#d9d9d9" stroke-width="1"/><line x1="1134.5" y1="100" x2="1134.5" y2="104" stroke="#d9d9d9" stroke-width="1"/><line x1="1140.5" y1="100" x2="1140.5" y2="104" stroke="#d9d9d9" stroke-width="1"/><line x1="1147.5" y1="100" x2="1147.5" y2="104" stroke="#d9d9d9" stroke-width="1"/><line x1="1153.5" y1="101" x2="1153.5" y2="104" stroke="#d4d4d4" stroke-width="1"/><text x="1153.0" y="101" font-family="Liberation Sans" font-size="8.8" fill="#b4b4b4" text-anchor="middle">1100</text><line x1="1159.5" y1="100" x2="1159.5" y2="104" stroke="#d9d9d9" stroke-width="1"/><line x1="1166.5" y1="100" x2="1166.5" y2="104" stroke="#d9d9d9" stroke-width="1"/><line x1="1172.5" y1="100" x2="1172.5" y2="104" stroke="#d9d9d9" stroke-width="1"/><line x1="1178.5" y1="100" x2="1178.5" y2="104" stroke="#d9d9d9" stroke-width="1"/><line x1="1184.5" y1="96" x2="1184.5" y2="104" stroke="#d9d9d9" stroke-width="1"/><line x1="1191.5" y1="100" x2="1191.5" y2="104" stroke="#d9d9d9" stroke-width="1"/><line x1="1197.5" y1="100" x2="1197.5" y2="104" stroke="#d9d9d9" stroke-width="1"/><line x1="1203.5" y1="100" x2="1203.5" y2="104" stroke="#d9d9d9" stroke-width="1"/><line x1="1210.5" y1="100" x2="1210.5" y2="104" stroke="#d9d9d9" stroke-width="1"/><line x1="1216.5" y1="101" x2="1216.5" y2="104" stroke="#d4d4d4" stroke-width="1"/><text x="1216.0" y="101" font-family="Liberation Sans" font-size="8.8" fill="#b4b4b4" text-anchor="middle">1200</text><line x1="1222.5" y1="100" x2="1222.5" y2="104" stroke="#d9d9d9" stroke-width="1"/><line x1="1229.5" y1="100" x2="1229.5" y2="104" stroke="#d9d9d9" stroke-width="1"/><line x1="1235.5" y1="100" x2="1235.5" y2="104" stroke="#d9d9d9" stroke-width="1"/><line x1="1241.5" y1="100" x2="1241.5" y2="104" stroke="#d9d9d9" stroke-width="1"/><line x1="1248.5" y1="96" x2="1248.5" y2="104" stroke="#d9d9d9" stroke-width="1"/><line x1="1254.5" y1="100" x2="1254.5" y2="104" stroke="#d9d9d9" stroke-width="1"/><line x1="1260.5" y1="100" x2="1260.5" y2="104" stroke="#d9d9d9" stroke-width="1"/><line x1="1266.5" y1="100" x2="1266.5" y2="104" stroke="#d9d9d9" stroke-width="1"/><line x1="1273.5" y1="100" x2="1273.5" y2="104" stroke="#d9d9d9" stroke-width="1"/><line x1="1279.5" y1="101" x2="1279.5" y2="104" stroke="#d4d4d4" stroke-width="1"/><text x="1279.0" y="101" font-family="Liberation Sans" font-size="8.8" fill="#b4b4b4" text-anchor="middle">1300</text><line x1="1285.5" y1="100" x2="1285.5" y2="104" stroke="#d9d9d9" stroke-width="1"/><line x1="1292.5" y1="100" x2="1292.5" y2="104" stroke="#d9d9d9" stroke-width="1"/><line x1="1298.5" y1="100" x2="1298.5" y2="104" stroke="#d9d9d9" stroke-width="1"/><line x1="1304.5" y1="100" x2="1304.5" y2="104" stroke="#d9d9d9" stroke-width="1"/><line x1="1310.5" y1="96" x2="1310.5" y2="104" stroke="#d9d9d9" stroke-width="1"/><line x1="1317.5" y1="100" x2="1317.5" y2="104" stroke="#d9d9d9" stroke-width="1"/><line x1="1323.5" y1="100" x2="1323.5" y2="104" stroke="#d9d9d9" stroke-width="1"/><line x1="1329.5" y1="100" x2="1329.5" y2="104" stroke="#d9d9d9" stroke-width="1"/><line x1="1336.5" y1="100" x2="1336.5" y2="104" stroke="#d9d9d9" stroke-width="1"/><line x1="1342.5" y1="101" x2="1342.5" y2="104" stroke="#d4d4d4" stroke-width="1"/><text x="1342.0" y="101" font-family="Liberation Sans" font-size="8.8" fill="#b4b4b4" text-anchor="middle">1400</text><line x1="1348.5" y1="100" x2="1348.5" y2="104" stroke="#d9d9d9" stroke-width="1"/><line x1="1355.5" y1="100" x2="1355.5" y2="104" stroke="#d9d9d9" stroke-width="1"/><line x1="1361.5" y1="100" x2="1361.5" y2="104" stroke="#d9d9d9" stroke-width="1"/><line x1="1367.5" y1="100" x2="1367.5" y2="104" stroke="#d9d9d9" stroke-width="1"/><line x1="1374.5" y1="96" x2="1374.5" y2="104" stroke="#d9d9d9" stroke-width="1"/><line x1="1380.5" y1="100" x2="1380.5" y2="104" stroke="#d9d9d9" stroke-width="1"/><line x1="1386.5" y1="100" x2="1386.5" y2="104" stroke="#d9d9d9" stroke-width="1"/><line x1="1392.5" y1="100" x2="1392.5" y2="104" stroke="#d9d9d9" stroke-width="1"/><line x1="1399.5" y1="100" x2="1399.5" y2="104" stroke="#d9d9d9" stroke-width="1"/><line x1="1405.5" y1="101" x2="1405.5" y2="104" stroke="#d4d4d4" stroke-width="1"/><text x="1405.0" y="101" font-family="Liberation Sans" font-size="8.8" fill="#b4b4b4" text-anchor="middle">1500</text><line x1="1411.5" y1="100" x2="1411.5" y2="104" stroke="#d9d9d9" stroke-width="1"/><line x1="1418.5" y1="100" x2="1418.5" y2="104" stroke="#d9d9d9" stroke-width="1"/><line x1="1424.5" y1="100" x2="1424.5" y2="104" stroke="#d9d9d9" stroke-width="1"/><line x1="1430.5" y1="100" x2="1430.5" y2="104" stroke="#d9d9d9" stroke-width="1"/><line x1="1436.5" y1="96" x2="1436.5" y2="104" stroke="#d9d9d9" stroke-width="1"/><line x1="1443.5" y1="100" x2="1443.5" y2="104" stroke="#d9d9d9" stroke-width="1"/><line x1="1449.5" y1="100" x2="1449.5" y2="104" stroke="#d9d9d9" stroke-width="1"/><line x1="1455.5" y1="100" x2="1455.5" y2="104" stroke="#d9d9d9" stroke-width="1"/><line x1="1462.5" y1="100" x2="1462.5" y2="104" stroke="#d9d9d9" stroke-width="1"/><line x1="1468.5" y1="101" x2="1468.5" y2="104" stroke="#d4d4d4" stroke-width="1"/><text x="1468.0" y="101" font-family="Liberation Sans" font-size="8.8" fill="#b4b4b4" text-anchor="middle">1600</text><line x1="1474.5" y1="100" x2="1474.5" y2="104" stroke="#d9d9d9" stroke-width="1"/><line x1="1481.5" y1="100" x2="1481.5" y2="104" stroke="#d9d9d9" stroke-width="1"/><line x1="1487.5" y1="100" x2="1487.5" y2="104" stroke="#d9d9d9" stroke-width="1"/><line x1="1493.5" y1="100" x2="1493.5" y2="104" stroke="#d9d9d9" stroke-width="1"/><line x1="1500.5" y1="96" x2="1500.5" y2="104" stroke="#d9d9d9" stroke-width="1"/><line x1="1506.5" y1="100" x2="1506.5" y2="104" stroke="#d9d9d9" stroke-width="1"/><line x1="1512.5" y1="100" x2="1512.5" y2="104" stroke="#d9d9d9" stroke-width="1"/><line x1="1518.5" y1="100" x2="1518.5" y2="104" stroke="#d9d9d9" stroke-width="1"/><line x1="1525.5" y1="100" x2="1525.5" y2="104" stroke="#d9d9d9" stroke-width="1"/><line x1="1531.5" y1="101" x2="1531.5" y2="104" stroke="#d4d4d4" stroke-width="1"/><text x="1531.0" y="101" font-family="Liberation Sans" font-size="8.8" fill="#b4b4b4" text-anchor="middle">1700</text><line x1="1537.5" y1="100" x2="1537.5" y2="104" stroke="#d9d9d9" stroke-width="1"/><line x1="1544.5" y1="100" x2="1544.5" y2="104" stroke="#d9d9d9" stroke-width="1"/><line x1="1550.5" y1="100" x2="1550.5" y2="104" stroke="#d9d9d9" stroke-width="1"/><line x1="1556.5" y1="100" x2="1556.5" y2="104" stroke="#d9d9d9" stroke-width="1"/><line x1="1562.5" y1="96" x2="1562.5" y2="104" stroke="#d9d9d9" stroke-width="1"/><line x1="1569.5" y1="100" x2="1569.5" y2="104" stroke="#d9d9d9" stroke-width="1"/><line x1="1575.5" y1="100" x2="1575.5" y2="104" stroke="#d9d9d9" stroke-width="1"/><line x1="1581.5" y1="100" x2="1581.5" y2="104" stroke="#d9d9d9" stroke-width="1"/><line x1="1588.5" y1="100" x2="1588.5" y2="104" stroke="#d9d9d9" stroke-width="1"/><line x1="1594.5" y1="101" x2="1594.5" y2="104" stroke="#d4d4d4" stroke-width="1"/><text x="1594.0" y="101" font-family="Liberation Sans" font-size="8.8" fill="#b4b4b4" text-anchor="middle">1800</text><line x1="1600.5" y1="100" x2="1600.5" y2="104" stroke="#d9d9d9" stroke-width="1"/><line x1="1607.5" y1="100" x2="1607.5" y2="104" stroke="#d9d9d9" stroke-width="1"/><line x1="1613.5" y1="100" x2="1613.5" y2="104" stroke="#d9d9d9" stroke-width="1"/><line x1="1619.5" y1="100" x2="1619.5" y2="104" stroke="#d9d9d9" stroke-width="1"/><line x1="1626.5" y1="96" x2="1626.5" y2="104" stroke="#d9d9d9" stroke-width="1"/><line x1="1632.5" y1="100" x2="1632.5" y2="104" stroke="#d9d9d9" stroke-width="1"/><line x1="1638.5" y1="100" x2="1638.5" y2="104" stroke="#d9d9d9" stroke-width="1"/><line x1="1644.5" y1="100" x2="1644.5" y2="104" stroke="#d9d9d9" stroke-width="1"/><line x1="1651.5" y1="100" x2="1651.5" y2="104" stroke="#d9d9d9" stroke-width="1"/><line x1="1657.5" y1="101" x2="1657.5" y2="104" stroke="#d4d4d4" stroke-width="1"/><text x="1657.0" y="101" font-family="Liberation Sans" font-size="8.8" fill="#b4b4b4" text-anchor="middle">1900</text><line x1="1663.5" y1="100" x2="1663.5" y2="104" stroke="#d9d9d9" stroke-width="1"/><line x1="1670.5" y1="100" x2="1670.5" y2="104" stroke="#d9d9d9" stroke-width="1"/><line x1="225" y1="149.5" x2="228" y2="149.5" stroke="#d4d4d4" stroke-width="1"/><text x="0" y="0" transform="translate(223.5 149.0) rotate(-90)" font-family="Liberation Sans" font-size="8.8" fill="#b4b4b4" text-anchor="middle">0</text><line x1="223" y1="155.5" x2="228" y2="155.5" stroke="#d9d9d9" stroke-width="1"/><line x1="223" y1="162.5" x2="228" y2="162.5" stroke="#d9d9d9" stroke-width="1"/><line x1="223" y1="168.5" x2="228" y2="168.5" stroke="#d9d9d9" stroke-width="1"/><line x1="223" y1="174.5" x2="228" y2="174.5" stroke="#d9d9d9" stroke-width="1"/><line x1="219" y1="180.5" x2="228" y2="180.5" stroke="#d9d9d9" stroke-width="1"/><line x1="223" y1="187.5" x2="228" y2="187.5" stroke="#d9d9d9" stroke-width="1"/><line x1="223" y1="193.5" x2="228" y2="193.5" stroke="#d9d9d9" stroke-width="1"/><line x1="223" y1="199.5" x2="228" y2="199.5" stroke="#d9d9d9" stroke-width="1"/><line x1="223" y1="206.5" x2="228" y2="206.5" stroke="#d9d9d9" stroke-width="1"/><line x1="225" y1="212.5" x2="228" y2="212.5" stroke="#d4d4d4" stroke-width="1"/><text x="0" y="0" transform="translate(223.5 212.0) rotate(-90)" font-family="Liberation Sans" font-size="8.8" fill="#b4b4b4" text-anchor="middle">100</text><line x1="223" y1="218.5" x2="228" y2="218.5" stroke="#d9d9d9" stroke-width="1"/><line x1="223" y1="225.5" x2="228" y2="225.5" stroke="#d9d9d9" stroke-width="1"/><line x1="223" y1="231.5" x2="228" y2="231.5" stroke="#d9d9d9" stroke-width="1"/><line x1="223" y1="237.5" x2="228" y2="237.5" stroke="#d9d9d9" stroke-width="1"/><line x1="219" y1="244.5" x2="228" y2="244.5" stroke="#d9d9d9" stroke-width="1"/><line x1="223" y1="250.5" x2="228" y2="250.5" stroke="#d9d9d9" stroke-width="1"/><line x1="223" y1="256.5" x2="228" y2="256.5" stroke="#d9d9d9" stroke-width="1"/><line x1="223" y1="262.5" x2="228" y2="262.5" stroke="#d9d9d9" stroke-width="1"/><line x1="223" y1="269.5" x2="228" y2="269.5" stroke="#d9d9d9" stroke-width="1"/><line x1="225" y1="275.5" x2="228" y2="275.5" stroke="#d4d4d4" stroke-width="1"/><text x="0" y="0" transform="translate(223.5 275.0) rotate(-90)" font-family="Liberation Sans" font-size="8.8" fill="#b4b4b4" text-anchor="middle">200</text><line x1="223" y1="281.5" x2="228" y2="281.5" stroke="#d9d9d9" stroke-width="1"/><line x1="223" y1="288.5" x2="228" y2="288.5" stroke="#d9d9d9" stroke-width="1"/><line x1="223" y1="294.5" x2="228" y2="294.5" stroke="#d9d9d9" stroke-width="1"/><line x1="223" y1="300.5" x2="228" y2="300.5" stroke="#d9d9d9" stroke-width="1"/><line x1="219" y1="306.5" x2="228" y2="306.5" stroke="#d9d9d9" stroke-width="1"/><line x1="223" y1="313.5" x2="228" y2="313.5" stroke="#d9d9d9" stroke-width="1"/><line x1="223" y1="319.5" x2="228" y2="319.5" stroke="#d9d9d9" stroke-width="1"/><line x1="223" y1="325.5" x2="228" y2="325.5" stroke="#d9d9d9" stroke-width="1"/><line x1="223" y1="332.5" x2="228" y2="332.5" stroke="#d9d9d9" stroke-width="1"/><line x1="225" y1="338.5" x2="228" y2="338.5" stroke="#d4d4d4" stroke-width="1"/><text x="0" y="0" transform="translate(223.5 338.0) rotate(-90)" font-family="Liberation Sans" font-size="8.8" fill="#b4b4b4" text-anchor="middle">300</text><line x1="223" y1="344.5" x2="228" y2="344.5" stroke="#d9d9d9" stroke-width="1"/><line x1="223" y1="351.5" x2="228" y2="351.5" stroke="#d9d9d9" stroke-width="1"/><line x1="223" y1="357.5" x2="228" y2="357.5" stroke="#d9d9d9" stroke-width="1"/><line x1="223" y1="363.5" x2="228" y2="363.5" stroke="#d9d9d9" stroke-width="1"/><line x1="219" y1="370.5" x2="228" y2="370.5" stroke="#d9d9d9" stroke-width="1"/><line x1="223" y1="376.5" x2="228" y2="376.5" stroke="#d9d9d9" stroke-width="1"/><line x1="223" y1="382.5" x2="228" y2="382.5" stroke="#d9d9d9" stroke-width="1"/><line x1="223" y1="388.5" x2="228" y2="388.5" stroke="#d9d9d9" stroke-width="1"/><line x1="223" y1="395.5" x2="228" y2="395.5" stroke="#d9d9d9" stroke-width="1"/><line x1="225" y1="401.5" x2="228" y2="401.5" stroke="#d4d4d4" stroke-width="1"/><text x="0" y="0" transform="translate(223.5 401.0) rotate(-90)" font-family="Liberation Sans" font-size="8.8" fill="#b4b4b4" text-anchor="middle">400</text><line x1="223" y1="407.5" x2="228" y2="407.5" stroke="#d9d9d9" stroke-width="1"/><line x1="223" y1="414.5" x2="228" y2="414.5" stroke="#d9d9d9" stroke-width="1"/><line x1="223" y1="420.5" x2="228" y2="420.5" stroke="#d9d9d9" stroke-width="1"/><line x1="223" y1="426.5" x2="228" y2="426.5" stroke="#d9d9d9" stroke-width="1"/><line x1="219" y1="432.5" x2="228" y2="432.5" stroke="#d9d9d9" stroke-width="1"/><line x1="223" y1="439.5" x2="228" y2="439.5" stroke="#d9d9d9" stroke-width="1"/><line x1="223" y1="445.5" x2="228" y2="445.5" stroke="#d9d9d9" stroke-width="1"/><line x1="223" y1="451.5" x2="228" y2="451.5" stroke="#d9d9d9" stroke-width="1"/><line x1="223" y1="458.5" x2="228" y2="458.5" stroke="#d9d9d9" stroke-width="1"/><line x1="225" y1="464.5" x2="228" y2="464.5" stroke="#d4d4d4" stroke-width="1"/><text x="0" y="0" transform="translate(223.5 464.0) rotate(-90)" font-family="Liberation Sans" font-size="8.8" fill="#b4b4b4" text-anchor="middle">500</text><line x1="223" y1="470.5" x2="228" y2="470.5" stroke="#d9d9d9" stroke-width="1"/><line x1="223" y1="477.5" x2="228" y2="477.5" stroke="#d9d9d9" stroke-width="1"/><line x1="223" y1="483.5" x2="228" y2="483.5" stroke="#d9d9d9" stroke-width="1"/><line x1="223" y1="489.5" x2="228" y2="489.5" stroke="#d9d9d9" stroke-width="1"/><line x1="219" y1="496.5" x2="228" y2="496.5" stroke="#d9d9d9" stroke-width="1"/><line x1="223" y1="502.5" x2="228" y2="502.5" stroke="#d9d9d9" stroke-width="1"/><line x1="223" y1="508.5" x2="228" y2="508.5" stroke="#d9d9d9" stroke-width="1"/><line x1="223" y1="514.5" x2="228" y2="514.5" stroke="#d9d9d9" stroke-width="1"/><line x1="223" y1="521.5" x2="228" y2="521.5" stroke="#d9d9d9" stroke-width="1"/><line x1="225" y1="527.5" x2="228" y2="527.5" stroke="#d4d4d4" stroke-width="1"/><text x="0" y="0" transform="translate(223.5 527.0) rotate(-90)" font-family="Liberation Sans" font-size="8.8" fill="#b4b4b4" text-anchor="middle">600</text><line x1="223" y1="533.5" x2="228" y2="533.5" stroke="#d9d9d9" stroke-width="1"/><line x1="223" y1="540.5" x2="228" y2="540.5" stroke="#d9d9d9" stroke-width="1"/><line x1="223" y1="546.5" x2="228" y2="546.5" stroke="#d9d9d9" stroke-width="1"/><line x1="223" y1="552.5" x2="228" y2="552.5" stroke="#d9d9d9" stroke-width="1"/><line x1="219" y1="558.5" x2="228" y2="558.5" stroke="#d9d9d9" stroke-width="1"/><line x1="223" y1="565.5" x2="228" y2="565.5" stroke="#d9d9d9" stroke-width="1"/><line x1="223" y1="571.5" x2="228" y2="571.5" stroke="#d9d9d9" stroke-width="1"/><line x1="223" y1="577.5" x2="228" y2="577.5" stroke="#d9d9d9" stroke-width="1"/><line x1="223" y1="584.5" x2="228" y2="584.5" stroke="#d9d9d9" stroke-width="1"/><line x1="225" y1="590.5" x2="228" y2="590.5" stroke="#d4d4d4" stroke-width="1"/><text x="0" y="0" transform="translate(223.5 590.0) rotate(-90)" font-family="Liberation Sans" font-size="8.8" fill="#b4b4b4" text-anchor="middle">700</text><line x1="223" y1="596.5" x2="228" y2="596.5" stroke="#d9d9d9" stroke-width="1"/><line x1="223" y1="603.5" x2="228" y2="603.5" stroke="#d9d9d9" stroke-width="1"/><line x1="223" y1="609.5" x2="228" y2="609.5" stroke="#d9d9d9" stroke-width="1"/><line x1="223" y1="615.5" x2="228" y2="615.5" stroke="#d9d9d9" stroke-width="1"/><line x1="219" y1="622.5" x2="228" y2="622.5" stroke="#d9d9d9" stroke-width="1"/><line x1="223" y1="628.5" x2="228" y2="628.5" stroke="#d9d9d9" stroke-width="1"/><line x1="223" y1="634.5" x2="228" y2="634.5" stroke="#d9d9d9" stroke-width="1"/><line x1="223" y1="640.5" x2="228" y2="640.5" stroke="#d9d9d9" stroke-width="1"/><line x1="223" y1="647.5" x2="228" y2="647.5" stroke="#d9d9d9" stroke-width="1"/><line x1="225" y1="653.5" x2="228" y2="653.5" stroke="#d4d4d4" stroke-width="1"/><text x="0" y="0" transform="translate(223.5 653.0) rotate(-90)" font-family="Liberation Sans" font-size="8.8" fill="#b4b4b4" text-anchor="middle">800</text><line x1="223" y1="659.5" x2="228" y2="659.5" stroke="#d9d9d9" stroke-width="1"/><line x1="223" y1="666.5" x2="228" y2="666.5" stroke="#d9d9d9" stroke-width="1"/><line x1="223" y1="672.5" x2="228" y2="672.5" stroke="#d9d9d9" stroke-width="1"/><line x1="223" y1="678.5" x2="228" y2="678.5" stroke="#d9d9d9" stroke-width="1"/><line x1="219" y1="684.5" x2="228" y2="684.5" stroke="#d9d9d9" stroke-width="1"/><line x1="223" y1="691.5" x2="228" y2="691.5" stroke="#d9d9d9" stroke-width="1"/><line x1="223" y1="697.5" x2="228" y2="697.5" stroke="#d9d9d9" stroke-width="1"/><line x1="223" y1="703.5" x2="228" y2="703.5" stroke="#d9d9d9" stroke-width="1"/><line x1="223" y1="710.5" x2="228" y2="710.5" stroke="#d9d9d9" stroke-width="1"/><line x1="225" y1="716.5" x2="228" y2="716.5" stroke="#d4d4d4" stroke-width="1"/><text x="0" y="0" transform="translate(223.5 716.0) rotate(-90)" font-family="Liberation Sans" font-size="8.8" fill="#b4b4b4" text-anchor="middle">900</text><line x1="223" y1="722.5" x2="228" y2="722.5" stroke="#d9d9d9" stroke-width="1"/><line x1="223" y1="729.5" x2="228" y2="729.5" stroke="#d9d9d9" stroke-width="1"/><line x1="223" y1="735.5" x2="228" y2="735.5" stroke="#d9d9d9" stroke-width="1"/><line x1="223" y1="741.5" x2="228" y2="741.5" stroke="#d9d9d9" stroke-width="1"/><line x1="219" y1="748.5" x2="228" y2="748.5" stroke="#d9d9d9" stroke-width="1"/><line x1="223" y1="754.5" x2="228" y2="754.5" stroke="#d9d9d9" stroke-width="1"/><line x1="223" y1="760.5" x2="228" y2="760.5" stroke="#d9d9d9" stroke-width="1"/><line x1="223" y1="766.5" x2="228" y2="766.5" stroke="#d9d9d9" stroke-width="1"/><line x1="223" y1="773.5" x2="228" y2="773.5" stroke="#d9d9d9" stroke-width="1"/><line x1="225" y1="779.5" x2="228" y2="779.5" stroke="#d4d4d4" stroke-width="1"/><text x="0" y="0" transform="translate(223.5 779.0) rotate(-90)" font-family="Liberation Sans" font-size="8.8" fill="#b4b4b4" text-anchor="middle">1000</text><line x1="223" y1="785.5" x2="228" y2="785.5" stroke="#d9d9d9" stroke-width="1"/><line x1="223" y1="792.5" x2="228" y2="792.5" stroke="#d9d9d9" stroke-width="1"/><line x1="223" y1="798.5" x2="228" y2="798.5" stroke="#d9d9d9" stroke-width="1"/><line x1="223" y1="804.5" x2="228" y2="804.5" stroke="#d9d9d9" stroke-width="1"/><line x1="219" y1="810.5" x2="228" y2="810.5" stroke="#d9d9d9" stroke-width="1"/><line x1="223" y1="817.5" x2="228" y2="817.5" stroke="#d9d9d9" stroke-width="1"/><line x1="223" y1="823.5" x2="228" y2="823.5" stroke="#d9d9d9" stroke-width="1"/><line x1="223" y1="829.5" x2="228" y2="829.5" stroke="#d9d9d9" stroke-width="1"/></svg>
<div class="ab" style="left:1688px;top:376px;width:3px;height:285px;background:#dcdcdc;border-radius:2px"></div>
<div class="ab" style="left:659px;top:923px;width:514px;height:3px;background:#dcdcdc;border-radius:2px"></div>
<div class="ab" style="left:459px;top:149px;width:1211px;height:682px;box-shadow:0 0 2px 0.5px rgba(0,0,0,0.16);background:#fff;border-radius:1px"></div>
<div class="ab" style="left:460px;top:150px;width:1209px;height:680px;background:#05021b"></div>
<div class="t" style="left:929px;top:184.5px;font-size:29px;color:#dcdcfa">XX猪场—单元设备信息</div>
<div class="t" style="left:1401px;top:175px;font-size:14.4px;color:#dcdcf5">2025/04/15 星期二</div>
<div class="t" style="left:1407px;top:198px;font-size:28.6px;color:#dcdcfa">12:04:26</div>
<div class="card" style="left:522.5px;top:245.2px;height:120.2px"><div class="hl2"></div><div class="ball"></div><div class="ttl"></div><div class="ttx"><span>1</span>栋<span>1</span>单元</div><div class="bx" style="left:27.2px;top:41.8px;width:21px"></div><div class="bx" style="left:50.0px;top:41.8px;width:12.5px"></div><div class="val" style="left:28.5px;top:43.8px">0.00</div><div class="val" style="left:51.5px;top:43.8px">kg</div><div class="bx" style="left:100.0px;top:41.8px;width:21px"></div><div class="bx" style="left:122.8px;top:41.8px;width:12.5px"></div><div class="val" style="left:101.3px;top:43.8px">0.00</div><div class="val" style="left:124.3px;top:43.8px">kg</div><div class="nm" style="left:32.3px;top:60.6px">采食</div><div class="nm" style="left:105.6px;top:60.6px">饮水</div><div class="nm" style="left:32.3px;top:97.3px">温度</div><div class="nm" style="left:105.6px;top:97.3px">湿度</div><div class="bx" style="left:34.9px;top:77.5px;width:8.2px"></div><div class="dd" style="left:35.6px;top:84.8px"></div><div class="bx" style="left:51.6px;top:77.5px;width:11.5px"></div><div class="nm" style="left:52.1px;top:79.3px;color:#14b4f2;font-size:11px">℃</div><div class="bx" style="left:108.3px;top:77.5px;width:8.2px"></div><div class="dd" style="left:109px;top:84.8px"></div><div class="bx" style="left:122.5px;top:76.5px;width:26px"></div><div class="val" style="left:123.7px;top:77.8px;font-size:10.7px">%RH</div></div>
<div class="card" style="left:704.1px;top:245.2px;height:120.2px"><div class="hl2"></div><div class="ball"></div><div class="ttl"></div><div class="ttx"><span>1</span>栋<span>2</span>单元</div><div class="bx" style="left:27.2px;top:41.8px;width:21px"></div><div class="bx" style="left:50.0px;top:41.8px;width:12.5px"></div><div class="val" style="left:28.5px;top:43.8px">0.00</div><div class="val" style="left:51.5px;top:43.8px">kg</div><div class="bx" style="left:100.0px;top:41.8px;width:21px"></div><div class="bx" style="left:122.8px;top:41.8px;width:12.5px"></div><div class="val" style="left:101.3px;top:43.8px">0.00</div><div class="val" style="left:124.3px;top:43.8px">kg</div><div class="nm" style="left:32.3px;top:60.6px">采食</div><div class="nm" style="left:105.6px;top:60.6px">饮水</div><div class="nm" style="left:32.3px;top:97.3px">温度</div><div class="nm" style="left:105.6px;top:97.3px">湿度</div><div class="bx" style="left:34.9px;top:77.5px;width:8.2px"></div><div class="dd" style="left:35.6px;top:84.8px"></div><div class="bx" style="left:51.6px;top:77.5px;width:11.5px"></div><div class="nm" style="left:52.1px;top:79.3px;color:#14b4f2;font-size:11px">℃</div><div class="bx" style="left:108.3px;top:77.5px;width:8.2px"></div><div class="dd" style="left:109px;top:84.8px"></div><div class="bx" style="left:122.5px;top:76.5px;width:26px"></div><div class="val" style="left:123.7px;top:77.8px;font-size:10.7px">%RH</div></div>
<div class="card" style="left:885.8px;top:245.2px;height:120.2px"><div class="hl2"></div><div class="ball"></div><div class="ttl"></div><div class="ttx"><span>1</span>栋<span>3</span>单元</div><div class="bx" style="left:27.2px;top:41.8px;width:21px"></div><div class="bx" style="left:50.0px;top:41.8px;width:12.5px"></div><div class="val" style="left:28.5px;top:43.8px">0.00</div><div class="val" style="left:51.5px;top:43.8px">kg</div><div class="bx" style="left:100.0px;top:41.8px;width:21px"></div><div class="bx" style="left:122.8px;top:41.8px;width:12.5px"></div><div class="val" style="left:101.3px;top:43.8px">0.00</div><div class="val" style="left:124.3px;top:43.8px">kg</div><div class="nm" style="left:32.3px;top:60.6px">采食</div><div class="nm" style="left:105.6px;top:60.6px">饮水</div><div class="nm" style="left:32.3px;top:97.3px">温度</div><div class="nm" style="left:105.6px;top:97.3px">湿度</div><div class="bx" style="left:34.9px;top:77.5px;width:8.2px"></div><div class="dd" style="left:35.6px;top:84.8px"></div><div class="bx" style="left:51.6px;top:77.5px;width:11.5px"></div><div class="nm" style="left:52.1px;top:79.3px;color:#14b4f2;font-size:11px">℃</div><div class="bx" style="left:108.3px;top:77.5px;width:8.2px"></div><div class="dd" style="left:109px;top:84.8px"></div><div class="bx" style="left:122.5px;top:76.5px;width:26px"></div><div class="val" style="left:123.7px;top:77.8px;font-size:10.7px">%RH</div></div>
<div class="card" style="left:1067.7px;top:245.2px;height:120.2px"><div class="hl2"></div><div class="ball"></div><div class="ttl"></div><div class="ttx"><span>1</span>栋<span>4</span>单元</div><div class="bx" style="left:27.2px;top:41.8px;width:21px"></div><div class="bx" style="left:50.0px;top:41.8px;width:12.5px"></div><div class="val" style="left:28.5px;top:43.8px">0.00</div><div class="val" style="left:51.5px;top:43.8px">kg</div><div class="bx" style="left:100.0px;top:41.8px;width:21px"></div><div class="bx" style="left:122.8px;top:41.8px;width:12.5px"></div><div class="val" style="left:101.3px;top:43.8px">0.00</div><div class="val" style="left:124.3px;top:43.8px">kg</div><div class="nm" style="left:32.3px;top:60.6px">采食</div><div class="nm" style="left:105.6px;top:60.6px">饮水</div><div class="nm" style="left:32.3px;top:97.3px">温度</div><div class="nm" style="left:105.6px;top:97.3px">湿度</div><div class="bx" style="left:34.9px;top:77.5px;width:8.2px"></div><div class="dd" style="left:35.6px;top:84.8px"></div><div class="bx" style="left:51.6px;top:77.5px;width:11.5px"></div><div class="nm" style="left:52.1px;top:79.3px;color:#14b4f2;font-size:11px">℃</div><div class="bx" style="left:108.3px;top:77.5px;width:8.2px"></div><div class="dd" style="left:109px;top:84.8px"></div><div class="bx" style="left:122.5px;top:76.5px;width:26px"></div><div class="val" style="left:123.7px;top:77.8px;font-size:10.7px">%RH</div></div>
<div class="card" style="left:1251.4px;top:245.2px;height:120.2px"><div class="hl2"></div><div class="ball"></div><div class="ttl"></div><div class="ttx"><span>1</span>栋<span>5</span>单元</div><div class="bx" style="left:27.2px;top:41.8px;width:21px"></div><div class="bx" style="left:50.0px;top:41.8px;width:12.5px"></div><div class="val" style="left:28.5px;top:43.8px">0.00</div><div class="val" style="left:51.5px;top:43.8px">kg</div><div class="bx" style="left:100.0px;top:41.8px;width:21px"></div><div class="bx" style="left:122.8px;top:41.8px;width:12.5px"></div><div class="val" style="left:101.3px;top:43.8px">0.00</div><div class="val" style="left:124.3px;top:43.8px">kg</div><div class="nm" style="left:32.3px;top:60.6px">采食</div><div class="nm" style="left:105.6px;top:60.6px">饮水</div><div class="nm" style="left:32.3px;top:97.3px">温度</div><div class="nm" style="left:105.6px;top:97.3px">湿度</div><div class="bx" style="left:34.9px;top:77.5px;width:8.2px"></div><div class="dd" style="left:35.6px;top:84.8px"></div><div class="bx" style="left:51.6px;top:77.5px;width:11.5px"></div><div class="nm" style="left:52.1px;top:79.3px;color:#14b4f2;font-size:11px">℃</div><div class="bx" style="left:108.3px;top:77.5px;width:8.2px"></div><div class="dd" style="left:109px;top:84.8px"></div><div class="bx" style="left:122.5px;top:76.5px;width:26px"></div><div class="val" style="left:123.7px;top:77.8px;font-size:10.7px">%RH</div></div>
<div class="card" style="left:1432.6px;top:245.2px;height:120.2px"><div class="hl2"></div><div class="ball"></div><div class="ttl"></div><div class="ttx"><span>1</span>栋<span>6</span>单元</div><div class="bx" style="left:27.2px;top:41.8px;width:21px"></div><div class="bx" style="left:50.0px;top:41.8px;width:12.5px"></div><div class="val" style="left:28.5px;top:43.8px">0.00</div><div class="val" style="left:51.5px;top:43.8px">kg</div><div class="bx" style="left:100.0px;top:41.8px;width:21px"></div><div class="bx" style="left:122.8px;top:41.8px;width:12.5px"></div><div class="val" style="left:101.3px;top:43.8px">0.00</div><div class="val" style="left:124.3px;top:43.8px">kg</div><div class="nm" style="left:32.3px;top:60.6px">采食</div><div class="nm" style="left:105.6px;top:60.6px">饮水</div><div class="nm" style="left:32.3px;top:97.3px">温度</div><div class="nm" style="left:105.6px;top:97.3px">湿度</div><div class="bx" style="left:34.9px;top:77.5px;width:8.2px"></div><div class="dd" style="left:35.6px;top:84.8px"></div><div class="bx" style="left:51.6px;top:77.5px;width:11.5px"></div><div class="nm" style="left:52.1px;top:79.3px;color:#14b4f2;font-size:11px">℃</div><div class="bx" style="left:108.3px;top:77.5px;width:8.2px"></div><div class="dd" style="left:109px;top:84.8px"></div><div class="bx" style="left:122.5px;top:76.5px;width:26px"></div><div class="val" style="left:123.7px;top:77.8px;font-size:10.7px">%RH</div></div>
<div class="card" style="left:521.9px;top:374.8px;height:119px"><div class="hl2"></div><div class="ball"></div><div class="ttl"></div><div class="ttx"><span>2</span>栋<span>1</span>单元</div><div class="bx" style="left:27.2px;top:41.8px;width:21px"></div><div class="bx" style="left:50.0px;top:41.8px;width:12.5px"></div><div class="val" style="left:28.5px;top:43.8px">0.00</div><div class="val" style="left:51.5px;top:43.8px">kg</div><div class="bx" style="left:100.0px;top:41.8px;width:21px"></div><div class="bx" style="left:122.8px;top:41.8px;width:12.5px"></div><div class="val" style="left:101.3px;top:43.8px">0.00</div><div class="val" style="left:124.3px;top:43.8px">kg</div><div class="nm" style="left:32.3px;top:60.6px">采食</div><div class="nm" style="left:105.6px;top:60.6px">饮水</div><div class="nm" style="left:32.3px;top:97.3px">温度</div><div class="nm" style="left:105.6px;top:97.3px">湿度</div><div class="bx" style="left:34.9px;top:77.5px;width:8.2px"></div><div class="dd" style="left:35.6px;top:84.8px"></div><div class="bx" style="left:51.6px;top:77.5px;width:11.5px"></div><div class="nm" style="left:52.1px;top:79.3px;color:#14b4f2;font-size:11px">℃</div><div class="bx" style="left:108.3px;top:77.5px;width:8.2px"></div><div class="dd" style="left:109px;top:84.8px"></div><div class="bx" style="left:122.5px;top:76.5px;width:26px"></div><div class="val" style="left:123.7px;top:77.8px;font-size:10.7px">%RH</div></div>
<div class="card" style="left:703.5px;top:374.8px;height:119px"><div class="hl2"></div><div class="ball"></div><div class="ttl"></div><div class="ttx"><span>2</span>栋<span>2</span>单元</div><div class="bx" style="left:27.2px;top:41.8px;width:21px"></div><div class="bx" style="left:50.0px;top:41.8px;width:12.5px"></div><div class="val" style="left:28.5px;top:43.8px">0.00</div><div class="val" style="left:51.5px;top:43.8px">kg</div><div class="bx" style="left:100.0px;top:41.8px;width:21px"></div><div class="bx" style="left:122.8px;top:41.8px;width:12.5px"></div><div class="val" style="left:101.3px;top:43.8px">0.00</div><div class="val" style="left:124.3px;top:43.8px">kg</div><div class="nm" style="left:32.3px;top:60.6px">采食</div><div class="nm" style="left:105.6px;top:60.6px">饮水</div><div class="nm" style="left:32.3px;top:97.3px">温度</div><div class="nm" style="left:105.6px;top:97.3px">湿度</div><div class="bx" style="left:34.9px;top:77.5px;width:8.2px"></div><div class="dd" style="left:35.6px;top:84.8px"></div><div class="bx" style="left:51.6px;top:77.5px;width:11.5px"></div><div class="nm" style="left:52.1px;top:79.3px;color:#14b4f2;font-size:11px">℃</div><div class="bx" style="left:108.3px;top:77.5px;width:8.2px"></div><div class="dd" style="left:109px;top:84.8px"></div><div class="bx" style="left:122.5px;top:76.5px;width:26px"></div><div class="val" style="left:123.7px;top:77.8px;font-size:10.7px">%RH</div></div>
<div class="card" style="left:885.2px;top:374.8px;height:119px"><div class="hl2"></div><div class="ball"></div><div class="ttl"></div><div class="ttx"><span>2</span>栋<span>3</span>单元</div><div class="bx" style="left:27.2px;top:41.8px;width:21px"></div><div class="bx" style="left:50.0px;top:41.8px;width:12.5px"></div><div class="val" style="left:28.5px;top:43.8px">0.00</div><div class="val" style="left:51.5px;top:43.8px">kg</div><div class="bx" style="left:100.0px;top:41.8px;width:21px"></div><div class="bx" style="left:122.8px;top:41.8px;width:12.5px"></div><div class="val" style="left:101.3px;top:43.8px">0.00</div><div class="val" style="left:124.3px;top:43.8px">kg</div><div class="nm" style="left:32.3px;top:60.6px">采食</div><div class="nm" style="left:105.6px;top:60.6px">饮水</div><div class="nm" style="left:32.3px;top:97.3px">温度</div><div class="nm" style="left:105.6px;top:97.3px">湿度</div><div class="bx" style="left:34.9px;top:77.5px;width:8.2px"></div><div class="dd" style="left:35.6px;top:84.8px"></div><div class="bx" style="left:51.6px;top:77.5px;width:11.5px"></div><div class="nm" style="left:52.1px;top:79.3px;color:#14b4f2;font-size:11px">℃</div><div class="bx" style="left:108.3px;top:77.5px;width:8.2px"></div><div class="dd" style="left:109px;top:84.8px"></div><div class="bx" style="left:122.5px;top:76.5px;width:26px"></div><div class="val" style="left:123.7px;top:77.8px;font-size:10.7px">%RH</div></div>
<div class="card" style="left:1067.1px;top:374.8px;height:119px"><div class="hl2"></div><div class="ball"></div><div class="ttl"></div><div class="ttx"><span>2</span>栋<span>4</span>单元</div><div class="bx" style="left:27.2px;top:41.8px;width:21px"></div><div class="bx" style="left:50.0px;top:41.8px;width:12.5px"></div><div class="val" style="left:28.5px;top:43.8px">0.00</div><div class="val" style="left:51.5px;top:43.8px">kg</div><div class="bx" style="left:100.0px;top:41.8px;width:21px"></div><div class="bx" style="left:122.8px;top:41.8px;width:12.5px"></div><div class="val" style="left:101.3px;top:43.8px">0.00</div><div class="val" style="left:124.3px;top:43.8px">kg</div><div class="nm" style="left:32.3px;top:60.6px">采食</div><div class="nm" style="left:105.6px;top:60.6px">饮水</div><div class="nm" style="left:32.3px;top:97.3px">温度</div><div class="nm" style="left:105.6px;top:97.3px">湿度</div><div class="bx" style="left:34.9px;top:77.5px;width:8.2px"></div><div class="dd" style="left:35.6px;top:84.8px"></div><div class="bx" style="left:51.6px;top:77.5px;width:11.5px"></div><div class="nm" style="left:52.1px;top:79.3px;color:#14b4f2;font-size:11px">℃</div><div class="bx" style="left:108.3px;top:77.5px;width:8.2px"></div><div class="dd" style="left:109px;top:84.8px"></div><div class="bx" style="left:122.5px;top:76.5px;width:26px"></div><div class="val" style="left:123.7px;top:77.8px;font-size:10.7px">%RH</div></div>
<div class="card" style="left:1250.8px;top:374.8px;height:119px"><div class="hl2"></div><div class="ball"></div><div class="ttl"></div><div class="ttx"><span>2</span>栋<span>5</span>单元</div><div class="bx" style="left:27.2px;top:41.8px;width:21px"></div><div class="bx" style="left:50.0px;top:41.8px;width:12.5px"></div><div class="val" style="left:28.5px;top:43.8px">0.00</div><div class="val" style="left:51.5px;top:43.8px">kg</div><div class="bx" style="left:100.0px;top:41.8px;width:21px"></div><div class="bx" style="left:122.8px;top:41.8px;width:12.5px"></div><div class="val" style="left:101.3px;top:43.8px">0.00</div><div class="val" style="left:124.3px;top:43.8px">kg</div><div class="nm" style="left:32.3px;top:60.6px">采食</div><div class="nm" style="left:105.6px;top:60.6px">饮水</div><div class="nm" style="left:32.3px;top:97.3px">温度</div><div class="nm" style="left:105.6px;top:97.3px">湿度</div><div class="bx" style="left:34.9px;top:77.5px;width:8.2px"></div><div class="dd" style="left:35.6px;top:84.8px"></div><div class="bx" style="left:51.6px;top:77.5px;width:11.5px"></div><div class="nm" style="left:52.1px;top:79.3px;color:#14b4f2;font-size:11px">℃</div><div class="bx" style="left:108.3px;top:77.5px;width:8.2px"></div><div class="dd" style="left:109px;top:84.8px"></div><div class="bx" style="left:122.5px;top:76.5px;width:26px"></div><div class="val" style="left:123.7px;top:77.8px;font-size:10.7px">%RH</div></div>
<div class="card" style="left:1432.0px;top:374.8px;height:119px"><div class="hl2"></div><div class="ball"></div><div class="ttl"></div><div class="ttx"><span>2</span>栋<span>6</span>单元</div><div class="bx" style="left:27.2px;top:41.8px;width:21px"></div><div class="bx" style="left:50.0px;top:41.8px;width:12.5px"></div><div class="val" style="left:28.5px;top:43.8px">0.00</div><div class="val" style="left:51.5px;top:43.8px">kg</div><div class="bx" style="left:100.0px;top:41.8px;width:21px"></div><div class="bx" style="left:122.8px;top:41.8px;width:12.5px"></div><div class="val" style="left:101.3px;top:43.8px">0.00</div><div class="val" style="left:124.3px;top:43.8px">kg</div><div class="nm" style="left:32.3px;top:60.6px">采食</div><div class="nm" style="left:105.6px;top:60.6px">饮水</div><div class="nm" style="left:32.3px;top:97.3px">温度</div><div class="nm" style="left:105.6px;top:97.3px">湿度</div><div class="bx" style="left:34.9px;top:77.5px;width:8.2px"></div><div class="dd" style="left:35.6px;top:84.8px"></div><div class="bx" style="left:51.6px;top:77.5px;width:11.5px"></div><div class="nm" style="left:52.1px;top:79.3px;color:#14b4f2;font-size:11px">℃</div><div class="bx" style="left:108.3px;top:77.5px;width:8.2px"></div><div class="dd" style="left:109px;top:84.8px"></div><div class="bx" style="left:122.5px;top:76.5px;width:26px"></div><div class="val" style="left:123.7px;top:77.8px;font-size:10.7px">%RH</div></div>
<div class="card" style="left:521.5px;top:503.2px;height:119.2px"><div class="hl2"></div><div class="ball"></div><div class="ttl"></div><div class="ttx"><span>3</span>栋<span>1</span>单元</div><div class="bx" style="left:27.2px;top:41.8px;width:21px"></div><div class="bx" style="left:50.0px;top:41.8px;width:12.5px"></div><div class="val" style="left:28.5px;top:43.8px">0.00</div><div class="val" style="left:51.5px;top:43.8px">kg</div><div class="bx" style="left:100.0px;top:41.8px;width:21px"></div><div class="bx" style="left:122.8px;top:41.8px;width:12.5px"></div><div class="val" style="left:101.3px;top:43.8px">0.00</div><div class="val" style="left:124.3px;top:43.8px">kg</div><div class="nm" style="left:32.3px;top:60.6px">采食</div><div class="nm" style="left:105.6px;top:60.6px">饮水</div><div class="nm" style="left:32.3px;top:97.3px">温度</div><div class="nm" style="left:105.6px;top:97.3px">湿度</div><div class="bx" style="left:34.9px;top:77.5px;width:8.2px"></div><div class="dd" style="left:35.6px;top:84.8px"></div><div class="bx" style="left:51.6px;top:77.5px;width:11.5px"></div><div class="nm" style="left:52.1px;top:79.3px;color:#14b4f2;font-size:11px">℃</div><div class="bx" style="left:108.3px;top:77.5px;width:8.2px"></div><div class="dd" style="left:109px;top:84.8px"></div><div class="bx" style="left:122.5px;top:76.5px;width:26px"></div><div class="val" style="left:123.7px;top:77.8px;font-size:10.7px">%RH</div></div>
<div class="card" style="left:703.1px;top:503.2px;height:119.2px"><div class="hl2"></div><div class="ball"></div><div class="ttl"></div><div class="ttx"><span>3</span>栋<span>2</span>单元</div><div class="bx" style="left:27.2px;top:41.8px;width:21px"></div><div class="bx" style="left:50.0px;top:41.8px;width:12.5px"></div><div class="val" style="left:28.5px;top:43.8px">0.00</div><div class="val" style="left:51.5px;top:43.8px">kg</div><div class="bx" style="left:100.0px;top:41.8px;width:21px"></div><div class="bx" style="left:122.8px;top:41.8px;width:12.5px"></div><div class="val" style="left:101.3px;top:43.8px">0.00</div><div class="val" style="left:124.3px;top:43.8px">kg</div><div class="nm" style="left:32.3px;top:60.6px">采食</div><div class="nm" style="left:105.6px;top:60.6px">饮水</div><div class="nm" style="left:32.3px;top:97.3px">温度</div><div class="nm" style="left:105.6px;top:97.3px">湿度</div><div class="bx" style="left:34.9px;top:77.5px;width:8.2px"></div><div class="dd" style="left:35.6px;top:84.8px"></div><div class="bx" style="left:51.6px;top:77.5px;width:11.5px"></div><div class="nm" style="left:52.1px;top:79.3px;color:#14b4f2;font-size:11px">℃</div><div class="bx" style="left:108.3px;top:77.5px;width:8.2px"></div><div class="dd" style="left:109px;top:84.8px"></div><div class="bx" style="left:122.5px;top:76.5px;width:26px"></div><div class="val" style="left:123.7px;top:77.8px;font-size:10.7px">%RH</div></div>
<div class="card" style="left:884.8px;top:503.2px;height:119.2px"><div class="hl2"></div><div class="ball"></div><div class="ttl"></div><div class="ttx"><span>3</span>栋<span>3</span>单元</div><div class="bx" style="left:27.2px;top:41.8px;width:21px"></div><div class="bx" style="left:50.0px;top:41.8px;width:12.5px"></div><div class="val" style="left:28.5px;top:43.8px">0.00</div><div class="val" style="left:51.5px;top:43.8px">kg</div><div class="bx" style="left:100.0px;top:41.8px;width:21px"></div><div class="bx" style="left:122.8px;top:41.8px;width:12.5px"></div><div class="val" style="left:101.3px;top:43.8px">0.00</div><div class="val" style="left:124.3px;top:43.8px">kg</div><div class="nm" style="left:32.3px;top:60.6px">采食</div><div class="nm" style="left:105.6px;top:60.6px">饮水</div><div class="nm" style="left:32.3px;top:97.3px">温度</div><div class="nm" style="left:105.6px;top:97.3px">湿度</div><div class="bx" style="left:34.9px;top:77.5px;width:8.2px"></div><div class="dd" style="left:35.6px;top:84.8px"></div><div class="bx" style="left:51.6px;top:77.5px;width:11.5px"></div><div class="nm" style="left:52.1px;top:79.3px;color:#14b4f2;font-size:11px">℃</div><div class="bx" style="left:108.3px;top:77.5px;width:8.2px"></div><div class="dd" style="left:109px;top:84.8px"></div><div class="bx" style="left:122.5px;top:76.5px;width:26px"></div><div class="val" style="left:123.7px;top:77.8px;font-size:10.7px">%RH</div></div>
<div class="card" style="left:1066.7px;top:503.2px;height:119.2px"><div class="hl2"></div><div class="ball"></div><div class="ttl"></div><div class="ttx"><span>3</span>栋<span>4</span>单元</div><div class="bx" style="left:27.2px;top:41.8px;width:21px"></div><div class="bx" style="left:50.0px;top:41.8px;width:12.5px"></div><div class="val" style="left:28.5px;top:43.8px">0.00</div><div class="val" style="left:51.5px;top:43.8px">kg</div><div class="bx" style="left:100.0px;top:41.8px;width:21px"></div><div class="bx" style="left:122.8px;top:41.8px;width:12.5px"></div><div class="val" style="left:101.3px;top:43.8px">0.00</div><div class="val" style="left:124.3px;top:43.8px">kg</div><div class="nm" style="left:32.3px;top:60.6px">采食</div><div class="nm" style="left:105.6px;top:60.6px">饮水</div><div class="nm" style="left:32.3px;top:97.3px">温度</div><div class="nm" style="left:105.6px;top:97.3px">湿度</div><div class="bx" style="left:34.9px;top:77.5px;width:8.2px"></div><div class="dd" style="left:35.6px;top:84.8px"></div><div class="bx" style="left:51.6px;top:77.5px;width:11.5px"></div><div class="nm" style="left:52.1px;top:79.3px;color:#14b4f2;font-size:11px">℃</div><div class="bx" style="left:108.3px;top:77.5px;width:8.2px"></div><div class="dd" style="left:109px;top:84.8px"></div><div class="bx" style="left:122.5px;top:76.5px;width:26px"></div><div class="val" style="left:123.7px;top:77.8px;font-size:10.7px">%RH</div></div>
<div class="card" style="left:1250.4px;top:503.2px;height:119.2px"><div class="hl2"></div><div class="ball"></div><div class="ttl"></div><div class="ttx"><span>3</span>栋<span>5</span>单元</div><div class="bx" style="left:27.2px;top:41.8px;width:21px"></div><div class="bx" style="left:50.0px;top:41.8px;width:12.5px"></div><div class="val" style="left:28.5px;top:43.8px">0.00</div><div class="val" style="left:51.5px;top:43.8px">kg</div><div class="bx" style="left:100.0px;top:41.8px;width:21px"></div><div class="bx" style="left:122.8px;top:41.8px;width:12.5px"></div><div class="val" style="left:101.3px;top:43.8px">0.00</div><div class="val" style="left:124.3px;top:43.8px">kg</div><div class="nm" style="left:32.3px;top:60.6px">采食</div><div class="nm" style="left:105.6px;top:60.6px">饮水</div><div class="nm" style="left:32.3px;top:97.3px">温度</div><div class="nm" style="left:105.6px;top:97.3px">湿度</div><div class="bx" style="left:34.9px;top:77.5px;width:8.2px"></div><div class="dd" style="left:35.6px;top:84.8px"></div><div class="bx" style="left:51.6px;top:77.5px;width:11.5px"></div><div class="nm" style="left:52.1px;top:79.3px;color:#14b4f2;font-size:11px">℃</div><div class="bx" style="left:108.3px;top:77.5px;width:8.2px"></div><div class="dd" style="left:109px;top:84.8px"></div><div class="bx" style="left:122.5px;top:76.5px;width:26px"></div><div class="val" style="left:123.7px;top:77.8px;font-size:10.7px">%RH</div></div>
<div class="card" style="left:1431.6px;top:503.2px;height:119.2px"><div class="hl2"></div><div class="ball"></div><div class="ttl"></div><div class="ttx"><span>3</span>栋<span>6</span>单元</div><div class="bx" style="left:27.2px;top:41.8px;width:21px"></div><div class="bx" style="left:50.0px;top:41.8px;width:12.5px"></div><div class="val" style="left:28.5px;top:43.8px">0.00</div><div class="val" style="left:51.5px;top:43.8px">kg</div><div class="bx" style="left:100.0px;top:41.8px;width:21px"></div><div class="bx" style="left:122.8px;top:41.8px;width:12.5px"></div><div class="val" style="left:101.3px;top:43.8px">0.00</div><div class="val" style="left:124.3px;top:43.8px">kg</div><div class="nm" style="left:32.3px;top:60.6px">采食</div><div class="nm" style="left:105.6px;top:60.6px">饮水</div><div class="nm" style="left:32.3px;top:97.3px">温度</div><div class="nm" style="left:105.6px;top:97.3px">湿度</div><div class="bx" style="left:34.9px;top:77.5px;width:8.2px"></div><div class="dd" style="left:35.6px;top:84.8px"></div><div class="bx" style="left:51.6px;top:77.5px;width:11.5px"></div><div class="nm" style="left:52.1px;top:79.3px;color:#14b4f2;font-size:11px">℃</div><div class="bx" style="left:108.3px;top:77.5px;width:8.2px"></div><div class="dd" style="left:109px;top:84.8px"></div><div class="bx" style="left:122.5px;top:76.5px;width:26px"></div><div class="val" style="left:123.7px;top:77.8px;font-size:10.7px">%RH</div></div>
<div class="card" style="left:521.1px;top:632.4px;height:119.6px"><div class="hl2"></div><div class="ball"></div><div class="ttl"></div><div class="ttx"><span>4</span>栋<span>1</span>单元</div><div class="bx" style="left:27.2px;top:41.8px;width:21px"></div><div class="bx" style="left:50.0px;top:41.8px;width:12.5px"></div><div class="val" style="left:28.5px;top:43.8px">0.00</div><div class="val" style="left:51.5px;top:43.8px">kg</div><div class="bx" style="left:100.0px;top:41.8px;width:21px"></div><div class="bx" style="left:122.8px;top:41.8px;width:12.5px"></div><div class="val" style="left:101.3px;top:43.8px">0.00</div><div class="val" style="left:124.3px;top:43.8px">kg</div><div class="nm" style="left:32.3px;top:60.6px">采食</div><div class="nm" style="left:105.6px;top:60.6px">饮水</div><div class="nm" style="left:32.3px;top:97.3px">温度</div><div class="nm" style="left:105.6px;top:97.3px">湿度</div><div class="bx" style="left:34.9px;top:77.5px;width:8.2px"></div><div class="dd" style="left:35.6px;top:84.8px"></div><div class="bx" style="left:51.6px;top:77.5px;width:11.5px"></div><div class="nm" style="left:52.1px;top:79.3px;color:#14b4f2;font-size:11px">℃</div><div class="bx" style="left:108.3px;top:77.5px;width:8.2px"></div><div class="dd" style="left:109px;top:84.8px"></div><div class="bx" style="left:122.5px;top:76.5px;width:26px"></div><div class="val" style="left:123.7px;top:77.8px;font-size:10.7px">%RH</div></div>
<div class="card" style="left:702.7px;top:632.4px;height:119.6px"><div class="hl2"></div><div class="ball"></div><div class="ttl"></div><div class="ttx"><span>4</span>栋<span>2</span>单元</div><div class="bx" style="left:27.2px;top:41.8px;width:21px"></div><div class="bx" style="left:50.0px;top:41.8px;width:12.5px"></div><div class="val" style="left:28.5px;top:43.8px">0.00</div><div class="val" style="left:51.5px;top:43.8px">kg</div><div class="bx" style="left:100.0px;top:41.8px;width:21px"></div><div class="bx" style="left:122.8px;top:41.8px;width:12.5px"></div><div class="val" style="left:101.3px;top:43.8px">0.00</div><div class="val" style="left:124.3px;top:43.8px">kg</div><div class="nm" style="left:32.3px;top:60.6px">采食</div><div class="nm" style="left:105.6px;top:60.6px">饮水</div><div class="nm" style="left:32.3px;top:97.3px">温度</div><div class="nm" style="left:105.6px;top:97.3px">湿度</div><div class="bx" style="left:34.9px;top:77.5px;width:8.2px"></div><div class="dd" style="left:35.6px;top:84.8px"></div><div class="bx" style="left:51.6px;top:77.5px;width:11.5px"></div><div class="nm" style="left:52.1px;top:79.3px;color:#14b4f2;font-size:11px">℃</div><div class="bx" style="left:108.3px;top:77.5px;width:8.2px"></div><div class="dd" style="left:109px;top:84.8px"></div><div class="bx" style="left:122.5px;top:76.5px;width:26px"></div><div class="val" style="left:123.7px;top:77.8px;font-size:10.7px">%RH</div></div>
<div class="card" style="left:884.4px;top:632.4px;height:119.6px"><div class="hl2"></div><div class="ball"></div><div class="ttl"></div><div class="ttx"><span>4</span>栋<span>3</span>单元</div><div class="bx" style="left:27.2px;top:41.8px;width:21px"></div><div class="bx" style="left:50.0px;top:41.8px;width:12.5px"></div><div class="val" style="left:28.5px;top:43.8px">0.00</div><div class="val" style="left:51.5px;top:43.8px">kg</div><div class="bx" style="left:100.0px;top:41.8px;width:21px"></div><div class="bx" style="left:122.8px;top:41.8px;width:12.5px"></div><div class="val" style="left:101.3px;top:43.8px">0.00</div><div class="val" style="left:124.3px;top:43.8px">kg</div><div class="nm" style="left:32.3px;top:60.6px">采食</div><div class="nm" style="left:105.6px;top:60.6px">饮水</div><div class="nm" style="left:32.3px;top:97.3px">温度</div><div class="nm" style="left:105.6px;top:97.3px">湿度</div><div class="bx" style="left:34.9px;top:77.5px;width:8.2px"></div><div class="dd" style="left:35.6px;top:84.8px"></div><div class="bx" style="left:51.6px;top:77.5px;width:11.5px"></div><div class="nm" style="left:52.1px;top:79.3px;color:#14b4f2;font-size:11px">℃</div><div class="bx" style="left:108.3px;top:77.5px;width:8.2px"></div><div class="dd" style="left:109px;top:84.8px"></div><div class="bx" style="left:122.5px;top:76.5px;width:26px"></div><div class="val" style="left:123.7px;top:77.8px;font-size:10.7px">%RH</div></div>
<div class="card" style="left:1066.3px;top:632.4px;height:119.6px"><div class="hl2"></div><div class="ball"></div><div class="ttl"></div><div class="ttx"><span>4</span>栋<span>4</span>单元</div><div class="bx" style="left:27.2px;top:41.8px;width:21px"></div><div class="bx" style="left:50.0px;top:41.8px;width:12.5px"></div><div class="val" style="left:28.5px;top:43.8px">0.00</div><div class="val" style="left:51.5px;top:43.8px">kg</div><div class="bx" style="left:100.0px;top:41.8px;width:21px"></div><div class="bx" style="left:122.8px;top:41.8px;width:12.5px"></div><div class="val" style="left:101.3px;top:43.8px">0.00</div><div class="val" style="left:124.3px;top:43.8px">kg</div><div class="nm" style="left:32.3px;top:60.6px">采食</div><div class="nm" style="left:105.6px;top:60.6px">饮水</div><div class="nm" style="left:32.3px;top:97.3px">温度</div><div class="nm" style="left:105.6px;top:97.3px">湿度</div><div class="bx" style="left:34.9px;top:77.5px;width:8.2px"></div><div class="dd" style="left:35.6px;top:84.8px"></div><div class="bx" style="left:51.6px;top:77.5px;width:11.5px"></div><div class="nm" style="left:52.1px;top:79.3px;color:#14b4f2;font-size:11px">℃</div><div class="bx" style="left:108.3px;top:77.5px;width:8.2px"></div><div class="dd" style="left:109px;top:84.8px"></div><div class="bx" style="left:122.5px;top:76.5px;width:26px"></div><div class="val" style="left:123.7px;top:77.8px;font-size:10.7px">%RH</div></div>
<div class="card" style="left:1250.0px;top:632.4px;height:119.6px"><div class="hl2"></div><div class="ball"></div><div class="ttl"></div><div class="ttx"><span>4</span>栋<span>5</span>单元</div><div class="bx" style="left:27.2px;top:41.8px;width:21px"></div><div class="bx" style="left:50.0px;top:41.8px;width:12.5px"></div><div class="val" style="left:28.5px;top:43.8px">0.00</div><div class="val" style="left:51.5px;top:43.8px">kg</div><div class="bx" style="left:100.0px;top:41.8px;width:21px"></div><div class="bx" style="left:122.8px;top:41.8px;width:12.5px"></div><div class="val" style="left:101.3px;top:43.8px">0.00</div><div class="val" style="left:124.3px;top:43.8px">kg</div><div class="nm" style="left:32.3px;top:60.6px">采食</div><div class="nm" style="left:105.6px;top:60.6px">饮水</div><div class="nm" style="left:32.3px;top:97.3px">温度</div><div class="nm" style="left:105.6px;top:97.3px">湿度</div><div class="bx" style="left:34.9px;top:77.5px;width:8.2px"></div><div class="dd" style="left:35.6px;top:84.8px"></div><div class="bx" style="left:51.6px;top:77.5px;width:11.5px"></div><div class="nm" style="left:52.1px;top:79.3px;color:#14b4f2;font-size:11px">℃</div><div class="bx" style="left:108.3px;top:77.5px;width:8.2px"></div><div class="dd" style="left:109px;top:84.8px"></div><div class="bx" style="left:122.5px;top:76.5px;width:26px"></div><div class="val" style="left:123.7px;top:77.8px;font-size:10.7px">%RH</div></div>
<div class="card" style="left:1431.2px;top:632.4px;height:119.6px"><div class="hl2"></div><div class="ball"></div><div class="ttl"></div><div class="ttx"><span>4</span>栋<span>6</span>单元</div><div class="bx" style="left:27.2px;top:41.8px;width:21px"></div><div class="bx" style="left:50.0px;top:41.8px;width:12.5px"></div><div class="val" style="left:28.5px;top:43.8px">0.00</div><div class="val" style="left:51.5px;top:43.8px">kg</div><div class="bx" style="left:100.0px;top:41.8px;width:21px"></div><div class="bx" style="left:122.8px;top:41.8px;width:12.5px"></div><div class="val" style="left:101.3px;top:43.8px">0.00</div><div class="val" style="left:124.3px;top:43.8px">kg</div><div class="nm" style="left:32.3px;top:60.6px">采食</div><div class="nm" style="left:105.6px;top:60.6px">饮水</div><div class="nm" style="left:32.3px;top:97.3px">温度</div><div class="nm" style="left:105.6px;top:97.3px">湿度</div><div class="bx" style="left:34.9px;top:77.5px;width:8.2px"></div><div class="dd" style="left:35.6px;top:84.8px"></div><div class="bx" style="left:51.6px;top:77.5px;width:11.5px"></div><div class="nm" style="left:52.1px;top:79.3px;color:#14b4f2;font-size:11px">℃</div><div class="bx" style="left:108.3px;top:77.5px;width:8.2px"></div><div class="dd" style="left:109px;top:84.8px"></div><div class="bx" style="left:122.5px;top:76.5px;width:26px"></div><div class="val" style="left:123.7px;top:77.8px;font-size:10.7px">%RH</div></div>
<div class="ab" style="left:762px;top:771px;width:240px;height:37px;background:#0d3058;border-radius:3px"></div>
<div class="ab" style="left:761.5px;top:770.5px;width:241px;height:38px;border:1px dashed #1e8de8"></div>
<div class="t" style="left:867px;top:784.5px;font-size:10px;font-weight:bold;color:#f4f4f4">第一页</div>
<div class="ab" style="left:1129px;top:771px;width:240px;height:37px;background:#0d3058;border-radius:5px"></div>
<div class="t" style="left:1234px;top:784.5px;font-size:10px;font-weight:bold;color:#f4f4f4">第二页</div>
<div class="ab" style="left:712px;top:757px;width:342px;height:67px;border:1px solid #e53935"></div>
<div class="ab" style="left:748.6px;top:757.6px;width:10px;height:10px;border-radius:50%;background:#2fb5f5;border:1px solid #fff"></div>
<div class="ab" style="left:748.6px;top:783.5px;width:10px;height:10px;border-radius:50%;background:#2fb5f5;border:1px solid #fff"></div>
<div class="ab" style="left:748.6px;top:810.6px;width:10px;height:10px;border-radius:50%;background:#2fb5f5;border:1px solid #fff"></div>
<div class="ab" style="left:876.1px;top:757.6px;width:10px;height:10px;border-radius:50%;background:#2fb5f5;border:1px solid #fff"></div>
<div class="ab" style="left:876.1px;top:810.6px;width:10px;height:10px;border-radius:50%;background:#2fb5f5;border:1px solid #fff"></div>
<div class="ab" style="left:1004.0px;top:757.6px;width:10px;height:10px;border-radius:50%;background:#2fb5f5;border:1px solid #fff"></div>
<div class="ab" style="left:1004.0px;top:783.5px;width:10px;height:10px;border-radius:50%;background:#2fb5f5;border:1px solid #fff"></div>
<div class="ab" style="left:1004.0px;top:810.6px;width:10px;height:10px;border-radius:50%;background:#2fb5f5;border:1px solid #fff"></div>
<div class="ab" style="left:990.8px;top:771.5px;width:7.2px;height:7.2px;background:#f7a823;transform:rotate(45deg);border:1px solid #fff"></div>
<svg class="ab" style="left:1013.8px;top:744.4px" width="12" height="14" viewBox="0 0 12 14" fill="none" stroke="#29a8e8" stroke-width="1.9"><path d="M6 3.2A3.9 3.9 0 1 0 9.9 7.1"/><path d="M9.9 7.1A3.9 3.9 0 0 0 8.6 4.2" stroke-dasharray="1.2 0.8"/><polygon points="5.2,0.3 9,3.1 5.2,5.6" fill="#29a8e8" stroke="none"/></svg>
<div class="ab" style="left:1693px;top:92px;width:1px;height:871px;background:#dcdde0"></div>
<div class="ab" style="left:1694px;top:92px;width:217px;height:30px;background:#e3e4e6"></div>
<div class="ab" style="left:1694px;top:92px;width:54px;height:30px;background:#f1f2f4"></div>
<div class="ab" style="left:1802px;top:92px;width:1px;height:30px;background:#d5d6d9"></div>
<div class="ab" style="left:1857px;top:92px;width:1px;height:30px;background:#d5d6d9"></div>
<div class="t" style="left:1697px;top:103px;font-size:12px;color:#333">数据绑定</div>
<div class="t" style="left:1763px;top:102px;font-size:12px;color:#333">样式</div>
<div class="t" style="left:1818px;top:102px;font-size:12px;color:#333">文本</div>
<div class="t" style="left:1861px;top:102px;font-size:12px;color:#333">调整图形</div>
<div class="ab" style="left:1708px;top:148px;width:6px;height:1px;background:#e2e3e6"></div>
<div class="ab" style="left:1790px;top:148px;width:106px;height:1px;background:#e2e3e6"></div>
<div class="t" style="left:1727px;top:143.5px;font-size:12px;font-weight:bold;color:#222">数据交互</div>
<div class="ab" style="left:1708px;top:317px;width:6px;height:1px;background:#e2e3e6"></div>
<div class="ab" style="left:1790px;top:317px;width:106px;height:1px;background:#e2e3e6"></div>
<div class="t" style="left:1727px;top:312.5px;font-size:12px;font-weight:bold;color:#222">数据动效</div>
<div class="ab" style="left:1708px;top:174px;width:15px;height:14px;background:#e9eaed;border:1px solid #dadce0;border-radius:3px"></div>
<div class="t" style="left:1730px;top:175.5px;font-size:12.6px;color:#b3b5b9">按下</div>
<svg class="ab" style="left:1880px;top:174px" width="15" height="14" viewBox="0 0 15 14" fill="none" stroke="#555" stroke-width="1.1"><path d="M3.5 11.2L3.9 8.3L10.5 1.7L12.9 4.1L6.3 10.7Z"/><path d="M0.5 13.3H14.5"/></svg>
<div class="ab" style="left:1708px;top:208px;width:15px;height:14px;background:#e9eaed;border:1px solid #dadce0;border-radius:3px"></div>
<div class="t" style="left:1730px;top:209.5px;font-size:12.6px;color:#b3b5b9">抬起</div>
<svg class="ab" style="left:1880px;top:208px" width="15" height="14" viewBox="0 0 15 14" fill="none" stroke="#555" stroke-width="1.1"><path d="M3.5 11.2L3.9 8.3L10.5 1.7L12.9 4.1L6.3 10.7Z"/><path d="M0.5 13.3H14.5"/></svg>
<div class="ab" style="left:1708px;top:243px;width:15px;height:15px;background:#1677ff;border-radius:3px"></div>
<svg class="ab" style="left:1708px;top:243px" width="15" height="15" viewBox="0 0 15 15"><path d="M3.5 7.5L6.3 10.2L11.5 4.8" fill="none" stroke="#fff" stroke-width="1.5"/></svg>
<div class="t" style="left:1730px;top:244.5px;font-size:12.6px;color:#222">单击</div>
<svg class="ab" style="left:1880px;top:243px" width="15" height="14" viewBox="0 0 15 14" fill="none" stroke="#555" stroke-width="1.1"><path d="M3.5 11.2L3.9 8.3L10.5 1.7L12.9 4.1L6.3 10.7Z"/><path d="M0.5 13.3H14.5"/></svg>
<div class="ab" style="left:1708px;top:278px;width:15px;height:14px;background:#e9eaed;border:1px solid #dadce0;border-radius:3px"></div>
<div class="t" style="left:1730px;top:279.5px;font-size:12.6px;color:#b3b5b9">双击</div>
<svg class="ab" style="left:1880px;top:278px" width="15" height="14" viewBox="0 0 15 14" fill="none" stroke="#555" stroke-width="1.1"><path d="M3.5 11.2L3.9 8.3L10.5 1.7L12.9 4.1L6.3 10.7Z"/><path d="M0.5 13.3H14.5"/></svg>
<div class="ab" style="left:1708px;top:343px;width:15px;height:14px;background:#e9eaed;border:1px solid #dadce0;border-radius:3px"></div>
<div class="t" style="left:1730px;top:344.5px;font-size:12.6px;color:#b3b5b9">闪烁</div>
<svg class="ab" style="left:1880px;top:343px" width="15" height="14" viewBox="0 0 15 14" fill="none" stroke="#555" stroke-width="1.1"><path d="M3.5 11.2L3.9 8.3L10.5 1.7L12.9 4.1L6.3 10.7Z"/><path d="M0.5 13.3H14.5"/></svg>
<div class="ab" style="left:1708px;top:378px;width:15px;height:14px;background:#e9eaed;border:1px solid #dadce0;border-radius:3px"></div>
<div class="t" style="left:1730px;top:379.5px;font-size:12.6px;color:#b3b5b9">显示/隐藏</div>
<svg class="ab" style="left:1880px;top:378px" width="15" height="14" viewBox="0 0 15 14" fill="none" stroke="#555" stroke-width="1.1"><path d="M3.5 11.2L3.9 8.3L10.5 1.7L12.9 4.1L6.3 10.7Z"/><path d="M0.5 13.3H14.5"/></svg>
<div class="ab" style="left:1708px;top:412px;width:15px;height:14px;background:#e9eaed;border:1px solid #dadce0;border-radius:3px"></div>
<div class="t" style="left:1730px;top:413.5px;font-size:12.6px;color:#b3b5b9">旋转</div>
<svg class="ab" style="left:1880px;top:412px" width="15" height="14" viewBox="0 0 15 14" fill="none" stroke="#555" stroke-width="1.1"><path d="M3.5 11.2L3.9 8.3L10.5 1.7L12.9 4.1L6.3 10.7Z"/><path d="M0.5 13.3H14.5"/></svg>
<div class="ab" style="left:1708px;top:444px;width:188px;height:29px;background:#1677ff;border-radius:3px"></div>
<div class="t" style="left:1787px;top:452px;font-size:13px;font-weight:bold;color:#fff;letter-spacing:3px">保存</div>
<div class="ab" style="left:215px;top:928px;width:1478px;height:1px;background:#dcdde1"></div>
<div class="ab" style="left:215px;top:929px;width:1478px;height:34px;background:#f1f2f4"></div>
<div class="ab" style="left:243px;top:929px;width:64px;height:34px;background:#fff"></div>
<div class="ab" style="left:242px;top:929px;width:1px;height:34px;background:#dcdde1"></div>
<div class="ab" style="left:307px;top:929px;width:1px;height:34px;background:#dcdde1"></div>
<div class="ab" style="left:363px;top:929px;width:1px;height:34px;background:#dcdde1"></div>
<svg class="ab" style="left:226px;top:937px" width="6" height="15" viewBox="0 0 6 15"><circle cx="3" cy="2.2" r="1.7" fill="#666"/><circle cx="3" cy="7.5" r="1.7" fill="#666"/><circle cx="3" cy="12.8" r="1.7" fill="#666"/></svg>
<div class="t" style="left:254px;top:939.5px;font-size:11.6px;color:#333">第<span style="display:inline-block;margin:0 2px">1</span>页</div>
<svg class="ab" style="left:292px;top:941px" width="7" height="5" viewBox="0 0 7 5"><path d="M0.8 4.2L3.5 1.3L6.2 4.2" fill="none" stroke="#666" stroke-width="1.1"/></svg>
<div class="t" style="left:319px;top:939.5px;font-size:11.6px;color:#333">第<span style="display:inline-block;margin:0 2px">2</span>页</div>
<svg class="ab" style="left:371px;top:938px" width="14" height="14" viewBox="0 0 14 14"><path d="M7 0.5V13.5M0.5 7H13.5" stroke="#555" stroke-width="1.6"/></svg>
<div class="ab" style="left:1911px;top:0;width:1px;height:963px;background:#3a3a46"></div>
<div class="ab" style="left:1912px;top:0;width:2px;height:963px;background:#ffe733"></div>
<div class="ab" style="left:0;top:962px;width:1911px;height:1px;background:#fff"></div>
<div class="ab" style="left:0;top:961px;width:1911px;height:1px;background:#d8d9dc"></div>
<div class="ab" style="left:1680px;top:235px;width:234px;height:28px;border:1.3px solid #ff3030"></div>
<div class="ab" style="left:1873px;top:244px;width:32px;height:14px;border:1.3px solid #ff3030"></div>
</body></html>
